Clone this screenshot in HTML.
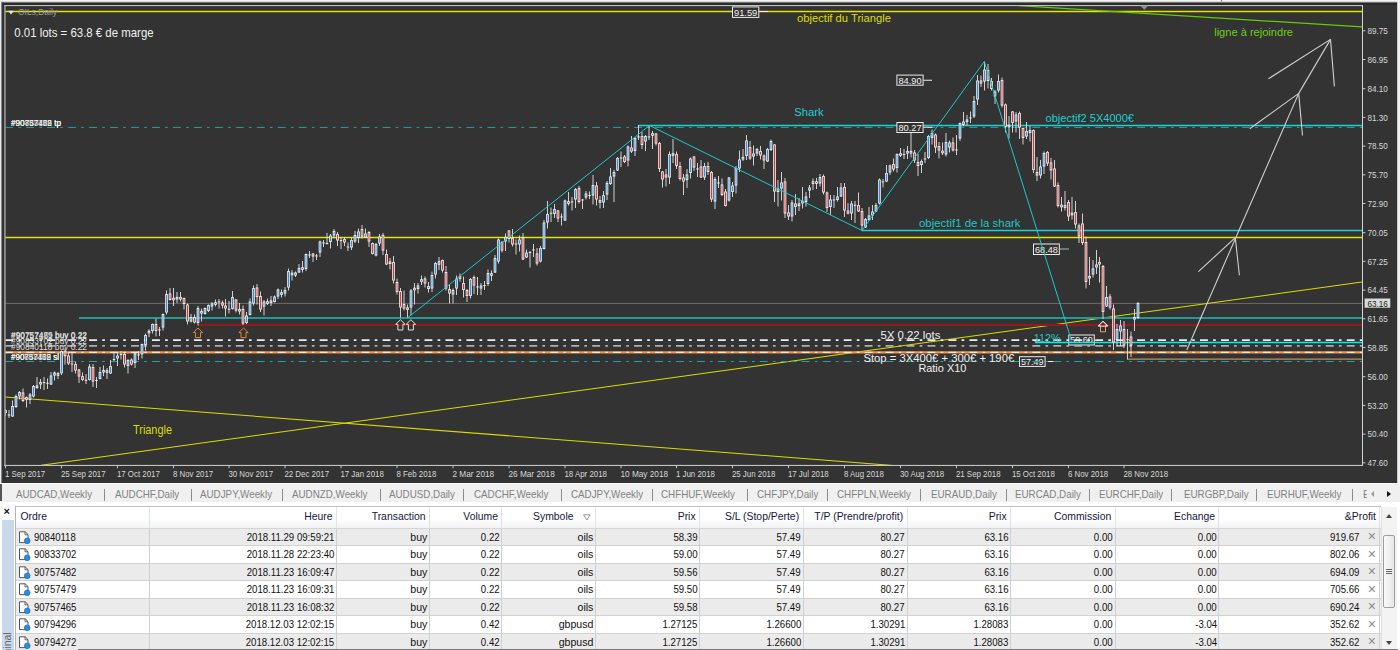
<!DOCTYPE html>
<html lang="fr"><head><meta charset="utf-8"><title>OILs,Daily</title>
<style>
html,body{margin:0;padding:0;}
body{width:1400px;height:650px;overflow:hidden;background:#fff;position:relative;font-family:"Liberation Sans", Arial, sans-serif;}
.chart{position:absolute;left:0;top:0;display:block;}
.tabs{position:absolute;left:0;top:483.4px;width:1400px;height:18.6px;background:#f0f0f0;border-top:1.3px solid #fbfbfb;box-sizing:border-box;overflow:hidden;}
.tabs:before{content:"";position:absolute;left:0;top:0;width:1.6px;height:17px;background:#555;}
.tab{position:absolute;top:3.9px;font-size:10.2px;line-height:13px;color:#828282;white-space:nowrap;transform:scaleX(0.962);transform-origin:left center;}
.sep{position:absolute;top:4.5px;width:1px;height:12px;background:#8c8c8c;}
.arl{position:absolute;left:1370.6px;top:6.5px;border:3px solid transparent;border-right:3.5px solid #9a9a9a;border-left:0;}
.arr{position:absolute;left:1386.5px;top:6.2px;border:3.4px solid transparent;border-left:4px solid #111;border-right:0;}
.term{position:absolute;left:0;top:502px;width:1400px;height:148px;background:#fff;overflow:hidden;}
.side{position:absolute;left:1.5px;top:18px;width:12px;height:130px;background:#c9d9ec;}
.sidetxt{position:absolute;left:-14px;top:143px;width:42px;height:12px;transform:rotate(-90deg);font-size:10.5px;color:#666;line-height:12px;white-space:nowrap;}
.xbtn{position:absolute;left:3.6px;top:3.0px;font-size:11px;font-weight:bold;color:#111;line-height:12px;}
.tbl{position:absolute;left:15px;top:4.2px;width:1366px;height:144px;border-top:1px solid #c2c2c2;border-left:1px solid #b4b4b4;box-sizing:border-box;background:#fff;overflow:hidden;}
.hdr{position:absolute;left:-1px;top:0;width:1366px;height:20.5px;background:linear-gradient(#ffffff,#ffffff 55%,#f1f2f4);border-bottom:1px solid #d5d5d5;}
.hc{position:absolute;top:0;height:20.5px;box-sizing:border-box;border-right:1px solid #e2e3e6;font-size:10.4px;color:#16163a;line-height:19.8px;white-space:nowrap;}
.hc.r{text-align:right;padding-right:3.4px;}
.hc.l{text-align:left;padding-left:5.5px;}
.srt{margin-left:9.5px;margin-right:0.6px;vertical-align:-0.5px;}
.row{position:absolute;left:-1px;width:1366px;height:17.5px;border-bottom:1px solid #d2d2d2;box-sizing:border-box;background:#fff;}
.row.g{background:#ebebeb;}
.c{position:absolute;top:0;height:16.5px;box-sizing:border-box;border-right:1px solid #d0d0d0;font-size:10.6px;color:#111;line-height:16.2px;white-space:nowrap;}
.c.r{text-align:right;padding-right:1.6px;}
.c.l{text-align:left;}
.v{display:inline-block;}
.n{transform:scaleX(0.91);transform-origin:right center;}
.ico{position:absolute;left:3px;top:2px;}
.ord{position:absolute;left:19px;top:0;display:inline-block;transform:scaleX(0.9);transform-origin:left center;}
.pv{position:absolute;right:19.5px;top:0;display:inline-block;transform:scaleX(0.91);transform-origin:right center;}
.cx{position:absolute;right:3.5px;top:-0.5px;font-size:14px;color:#8a8a8a;}
.sb{position:absolute;left:1381px;top:4.5px;width:16.2px;height:144px;background:#f3f3f3;border-left:1px solid #e0e0e0;box-sizing:border-box;}
.sb .up{position:absolute;left:4.4px;top:7px;border:3.3px solid transparent;border-bottom:4px solid #444;border-top:0;}
.sb .dn{position:absolute;left:4.4px;top:134px;border:3.3px solid transparent;border-top:4px solid #444;border-bottom:0;}
.thumb{position:absolute;left:1.2px;top:28.5px;width:11.6px;height:72.5px;background:linear-gradient(90deg,#fafafa,#e6e6e6);border:1px solid #9e9e9e;border-radius:2px;box-sizing:border-box;}
.thumb i{display:block;width:5.4px;height:1px;background:#666;margin:0 0 1.2px 2.2px;}
.thumb i:first-child{margin-top:32.5px;}
.botline{position:absolute;left:78px;top:146.6px;width:1320px;height:1.4px;background:#7a7a7a;}
</style></head>
<body>
<svg class="chart" width="1400" height="484" viewBox="0 0 1400 484" font-family='"Liberation Sans", Arial, sans-serif'>
<rect x="0" y="0" width="1400" height="484" fill="#333333"/>
<defs><clipPath id="plot"><rect x="5" y="6" width="1357" height="459.4"/></clipPath></defs>
<g clip-path="url(#plot)">
<rect x="1068.8" y="335.0" width="25.5" height="10.0" fill="#333333" stroke="#ececec" stroke-width="1"/>
<line x1="1094.8" y1="340" x2="1094.8" y2="340" stroke="#f0f0f0" stroke-width="1.1"/>
<text x="1081.55" y="343.3" font-size="9.8" fill="#f2f2f2" textLength="22.5" lengthAdjust="spacingAndGlyphs" text-anchor="middle">59.60</text>
<rect x="1019.5" y="356.7" width="25.6" height="9.7" fill="#333333" stroke="#ececec" stroke-width="1"/>
<line x1="1045.6" y1="361.5" x2="1055" y2="361.5" stroke="#f0f0f0" stroke-width="1.1"/>
<text x="1032.3" y="364.7" font-size="9.8" fill="#f2f2f2" textLength="22.6" lengthAdjust="spacingAndGlyphs" text-anchor="middle">57.49</text>
<line x1="5" y1="303.4" x2="1362.0" y2="303.4" stroke="#6c6c6c" stroke-width="1"/>
<line x1="5" y1="11.5" x2="1362.0" y2="11.5" stroke="#e4e400" stroke-width="1.4"/>
<line x1="5" y1="237.5" x2="1362.0" y2="237.5" stroke="#e4e400" stroke-width="1.4"/>
<line x1="1018.8" y1="5.7" x2="1362.0" y2="26.9" stroke="#66cc00" stroke-width="1.3"/>
<line x1="5.0" y1="397.0" x2="893.0" y2="465.4" stroke="#dcdc00" stroke-width="1.05"/>
<line x1="41.4" y1="465.2" x2="1362.0" y2="282.0" stroke="#dcdc00" stroke-width="1.05"/>
<line x1="79" y1="318" x2="1362.0" y2="318" stroke="#1e9c9c" stroke-width="2.2"/>
<line x1="198" y1="325" x2="1362.0" y2="325" stroke="#8e1c1c" stroke-width="2.2"/>
<line x1="5" y1="127.4" x2="1362.0" y2="127.4" stroke="#22a2a2" stroke-width="1.0" stroke-dasharray="7.9 5.2 2.66 5.2" stroke-dashoffset="-0.3"/>
<line x1="638.5" y1="125.5" x2="1362.0" y2="125.5" stroke="#16d4d4" stroke-width="1.3"/>
<line x1="862" y1="230.5" x2="1362.0" y2="230.5" stroke="#16d4d4" stroke-width="1.3"/>
<line x1="1035" y1="342.6" x2="1362.0" y2="342.6" stroke="#04f0f0" stroke-width="1.5"/>
<line x1="5" y1="340.2" x2="1362.0" y2="340.2" stroke="#ececec" stroke-width="1.75" stroke-dasharray="7.9 5.2 2.66 5.2" stroke-dashoffset="-0.3"/>
<line x1="5" y1="345.9" x2="1362.0" y2="345.9" stroke="#adadad" stroke-width="1.75" stroke-dasharray="7.9 5.2 2.66 5.2" stroke-dashoffset="-0.3"/>
<line x1="5" y1="352.3" x2="1362.0" y2="352.3" stroke="#f09650" stroke-width="2.2"/>
<line x1="5" y1="352.3" x2="1362.0" y2="352.3" stroke="#f4e6d8" stroke-width="1.2" stroke-dasharray="7.9 5.2 2.66 5.2" stroke-dashoffset="-0.3"/>
<line x1="1127.5" y1="359.2" x2="1362.0" y2="359.2" stroke="#c88c5a" stroke-width="1.3"/>
<line x1="5" y1="361.5" x2="1362.0" y2="361.5" stroke="#22a2a2" stroke-width="1.0" stroke-dasharray="7.9 5.2 2.66 5.2" stroke-dashoffset="-0.3"/>
<rect x="5.05" y="409.0" width="0.9" height="7.0" fill="#e2e2e2"/>
<rect x="4.19" y="410.0" width="2.62" height="3.0" fill="#f4f4f4"/>
<rect x="5.00" y="410.9" width="1.0" height="1.3" fill="#2f8fe6"/>
<rect x="8.55" y="410.0" width="0.9" height="8.0" fill="#e2e2e2"/>
<rect x="7.69" y="414.5" width="2.62" height="1.0" fill="#f4f4f4"/>
<rect x="12.05" y="400.5" width="0.9" height="16.5" fill="#e2e2e2"/>
<rect x="11.19" y="406.0" width="2.62" height="10.5" fill="#f4f4f4"/>
<rect x="12.00" y="406.9" width="1.0" height="8.8" fill="#2f8fe6"/>
<rect x="15.55" y="394.5" width="0.9" height="13.5" fill="#e2e2e2"/>
<rect x="14.69" y="396.0" width="2.62" height="11.0" fill="#f4f4f4"/>
<rect x="15.50" y="396.9" width="1.0" height="9.3" fill="#2f8fe6"/>
<rect x="19.05" y="391.0" width="0.9" height="8.5" fill="#e2e2e2"/>
<rect x="18.19" y="392.0" width="2.62" height="4.5" fill="#f4f4f4"/>
<rect x="19.00" y="392.9" width="1.0" height="2.8" fill="#2f8fe6"/>
<rect x="22.55" y="388.5" width="0.9" height="13.5" fill="#e2e2e2"/>
<rect x="21.69" y="392.5" width="2.62" height="8.5" fill="#f4f4f4"/>
<rect x="22.50" y="393.4" width="1.0" height="6.8" fill="#d63a3a"/>
<rect x="26.05" y="396.5" width="0.9" height="11.0" fill="#e2e2e2"/>
<rect x="25.19" y="397.2" width="2.62" height="2.6" fill="#f4f4f4"/>
<rect x="26.00" y="398.1" width="1.0" height="0.9" fill="#d63a3a"/>
<rect x="29.55" y="393.0" width="0.9" height="11.0" fill="#e2e2e2"/>
<rect x="28.69" y="394.5" width="2.62" height="5.5" fill="#f4f4f4"/>
<rect x="29.50" y="395.4" width="1.0" height="3.8" fill="#2f8fe6"/>
<rect x="33.05" y="385.0" width="0.9" height="12.5" fill="#e2e2e2"/>
<rect x="32.19" y="386.0" width="2.62" height="10.5" fill="#f4f4f4"/>
<rect x="33.00" y="386.9" width="1.0" height="8.8" fill="#2f8fe6"/>
<rect x="36.55" y="377.0" width="0.9" height="12.0" fill="#e2e2e2"/>
<rect x="35.69" y="385.4" width="2.62" height="2.6" fill="#f4f4f4"/>
<rect x="36.50" y="386.3" width="1.0" height="0.9" fill="#2f8fe6"/>
<rect x="40.05" y="379.0" width="0.9" height="10.0" fill="#e2e2e2"/>
<rect x="39.19" y="381.9" width="2.62" height="2.6" fill="#f4f4f4"/>
<rect x="40.00" y="382.8" width="1.0" height="0.9" fill="#2f8fe6"/>
<rect x="43.55" y="377.0" width="0.9" height="13.0" fill="#e2e2e2"/>
<rect x="42.69" y="382.2" width="2.62" height="0.9" fill="#f4f4f4"/>
<rect x="47.05" y="378.5" width="0.9" height="10.5" fill="#e2e2e2"/>
<rect x="46.19" y="382.8" width="2.62" height="0.9" fill="#f4f4f4"/>
<rect x="50.55" y="372.0" width="0.9" height="13.0" fill="#e2e2e2"/>
<rect x="49.69" y="375.5" width="2.62" height="9.0" fill="#f4f4f4"/>
<rect x="50.50" y="376.4" width="1.0" height="7.3" fill="#2f8fe6"/>
<rect x="54.05" y="371.5" width="0.9" height="9.0" fill="#e2e2e2"/>
<rect x="53.19" y="372.5" width="2.62" height="3.0" fill="#f4f4f4"/>
<rect x="54.00" y="373.4" width="1.0" height="1.3" fill="#2f8fe6"/>
<rect x="57.55" y="372.0" width="0.9" height="7.0" fill="#e2e2e2"/>
<rect x="56.69" y="373.2" width="2.62" height="2.6" fill="#f4f4f4"/>
<rect x="57.50" y="374.1" width="1.0" height="0.9" fill="#2f8fe6"/>
<rect x="61.05" y="350.5" width="0.9" height="24.5" fill="#e2e2e2"/>
<rect x="60.19" y="351.2" width="2.62" height="22.1" fill="#f4f4f4"/>
<rect x="61.00" y="352.1" width="1.0" height="20.4" fill="#2f8fe6"/>
<rect x="64.55" y="348.6" width="0.9" height="16.0" fill="#e2e2e2"/>
<rect x="63.69" y="351.4" width="2.62" height="4.8" fill="#f4f4f4"/>
<rect x="64.50" y="352.2" width="1.0" height="3.1" fill="#d63a3a"/>
<rect x="68.05" y="352.5" width="0.9" height="12.5" fill="#e2e2e2"/>
<rect x="67.19" y="355.5" width="2.62" height="8.0" fill="#f4f4f4"/>
<rect x="68.00" y="356.4" width="1.0" height="6.3" fill="#d63a3a"/>
<rect x="71.55" y="353.0" width="0.9" height="19.0" fill="#e2e2e2"/>
<rect x="70.69" y="363.5" width="2.62" height="0.9" fill="#f4f4f4"/>
<rect x="75.05" y="362.0" width="0.9" height="11.5" fill="#e2e2e2"/>
<rect x="74.19" y="364.0" width="2.62" height="6.5" fill="#f4f4f4"/>
<rect x="75.00" y="364.9" width="1.0" height="4.8" fill="#d63a3a"/>
<rect x="78.55" y="369.0" width="0.9" height="14.0" fill="#e2e2e2"/>
<rect x="77.69" y="369.5" width="2.62" height="7.0" fill="#f4f4f4"/>
<rect x="78.50" y="370.4" width="1.0" height="5.3" fill="#d63a3a"/>
<rect x="82.05" y="372.5" width="0.9" height="8.5" fill="#e2e2e2"/>
<rect x="81.19" y="376.2" width="2.62" height="3.8" fill="#f4f4f4"/>
<rect x="82.00" y="377.1" width="1.0" height="2.1" fill="#d63a3a"/>
<rect x="85.55" y="374.0" width="0.9" height="10.0" fill="#e2e2e2"/>
<rect x="84.69" y="379.8" width="2.62" height="0.9" fill="#f4f4f4"/>
<rect x="89.05" y="364.0" width="0.9" height="16.5" fill="#e2e2e2"/>
<rect x="88.19" y="366.5" width="2.62" height="13.5" fill="#f4f4f4"/>
<rect x="89.00" y="367.4" width="1.0" height="11.8" fill="#2f8fe6"/>
<rect x="92.55" y="364.0" width="0.9" height="23.0" fill="#e2e2e2"/>
<rect x="91.69" y="367.0" width="2.62" height="14.5" fill="#f4f4f4"/>
<rect x="92.50" y="367.9" width="1.0" height="12.8" fill="#d63a3a"/>
<rect x="96.05" y="377.0" width="0.9" height="11.0" fill="#e2e2e2"/>
<rect x="95.19" y="380.0" width="2.62" height="0.9" fill="#f4f4f4"/>
<rect x="99.55" y="367.0" width="0.9" height="12.5" fill="#e2e2e2"/>
<rect x="98.69" y="372.0" width="2.62" height="7.0" fill="#f4f4f4"/>
<rect x="99.50" y="372.9" width="1.0" height="5.3" fill="#2f8fe6"/>
<rect x="103.05" y="365.5" width="0.9" height="10.5" fill="#e2e2e2"/>
<rect x="102.19" y="369.9" width="2.62" height="2.6" fill="#f4f4f4"/>
<rect x="103.00" y="370.8" width="1.0" height="0.9" fill="#2f8fe6"/>
<rect x="106.55" y="368.0" width="0.9" height="11.0" fill="#e2e2e2"/>
<rect x="105.69" y="370.2" width="2.62" height="2.6" fill="#f4f4f4"/>
<rect x="106.50" y="371.1" width="1.0" height="0.9" fill="#d63a3a"/>
<rect x="110.05" y="360.0" width="0.9" height="14.0" fill="#e2e2e2"/>
<rect x="109.19" y="366.0" width="2.62" height="7.5" fill="#f4f4f4"/>
<rect x="110.00" y="366.9" width="1.0" height="5.8" fill="#2f8fe6"/>
<rect x="113.55" y="353.0" width="0.9" height="8.0" fill="#e2e2e2"/>
<rect x="112.69" y="359.0" width="2.62" height="0.9" fill="#f4f4f4"/>
<rect x="117.05" y="352.5" width="0.9" height="13.5" fill="#e2e2e2"/>
<rect x="116.19" y="355.5" width="2.62" height="3.0" fill="#f4f4f4"/>
<rect x="117.00" y="356.4" width="1.0" height="1.3" fill="#2f8fe6"/>
<rect x="120.55" y="351.0" width="0.9" height="8.5" fill="#e2e2e2"/>
<rect x="119.69" y="354.0" width="2.62" height="0.9" fill="#f4f4f4"/>
<rect x="124.05" y="352.5" width="0.9" height="15.0" fill="#e2e2e2"/>
<rect x="123.19" y="354.0" width="2.62" height="10.5" fill="#f4f4f4"/>
<rect x="124.00" y="354.9" width="1.0" height="8.8" fill="#d63a3a"/>
<rect x="127.55" y="359.0" width="0.9" height="14.5" fill="#e2e2e2"/>
<rect x="126.69" y="360.0" width="2.62" height="6.0" fill="#f4f4f4"/>
<rect x="127.50" y="360.9" width="1.0" height="4.3" fill="#2f8fe6"/>
<rect x="131.05" y="358.5" width="0.9" height="7.0" fill="#e2e2e2"/>
<rect x="130.19" y="359.5" width="2.62" height="5.0" fill="#f4f4f4"/>
<rect x="131.00" y="360.4" width="1.0" height="3.3" fill="#d63a3a"/>
<rect x="134.55" y="353.0" width="0.9" height="15.0" fill="#e2e2e2"/>
<rect x="133.69" y="353.5" width="2.62" height="9.5" fill="#f4f4f4"/>
<rect x="134.50" y="354.4" width="1.0" height="7.8" fill="#2f8fe6"/>
<rect x="138.05" y="351.0" width="0.9" height="9.0" fill="#e2e2e2"/>
<rect x="137.19" y="354.5" width="2.62" height="0.9" fill="#f4f4f4"/>
<rect x="141.55" y="343.6" width="0.9" height="15.0" fill="#e2e2e2"/>
<rect x="140.69" y="344.0" width="2.62" height="10.3" fill="#f4f4f4"/>
<rect x="141.50" y="344.9" width="1.0" height="8.6" fill="#2f8fe6"/>
<rect x="145.05" y="333.6" width="0.9" height="17.1" fill="#e2e2e2"/>
<rect x="144.19" y="335.0" width="2.62" height="10.0" fill="#f4f4f4"/>
<rect x="145.00" y="335.9" width="1.0" height="8.3" fill="#2f8fe6"/>
<rect x="148.55" y="329.3" width="0.9" height="7.8" fill="#e2e2e2"/>
<rect x="147.69" y="330.7" width="2.62" height="2.6" fill="#f4f4f4"/>
<rect x="148.50" y="331.6" width="1.0" height="0.9" fill="#2f8fe6"/>
<rect x="152.05" y="323.5" width="0.9" height="10.0" fill="#e2e2e2"/>
<rect x="151.19" y="324.0" width="2.62" height="7.0" fill="#f4f4f4"/>
<rect x="152.00" y="324.9" width="1.0" height="5.3" fill="#2f8fe6"/>
<rect x="155.55" y="318.5" width="0.9" height="18.0" fill="#e2e2e2"/>
<rect x="154.69" y="324.0" width="2.62" height="7.0" fill="#f4f4f4"/>
<rect x="155.50" y="324.9" width="1.0" height="5.3" fill="#d63a3a"/>
<rect x="159.05" y="327.0" width="0.9" height="9.0" fill="#e2e2e2"/>
<rect x="158.19" y="329.5" width="2.62" height="0.9" fill="#f4f4f4"/>
<rect x="162.55" y="313.5" width="0.9" height="17.0" fill="#e2e2e2"/>
<rect x="161.69" y="314.0" width="2.62" height="13.5" fill="#f4f4f4"/>
<rect x="162.50" y="314.9" width="1.0" height="11.8" fill="#2f8fe6"/>
<rect x="166.05" y="290.5" width="0.9" height="24.0" fill="#e2e2e2"/>
<rect x="165.19" y="294.0" width="2.62" height="18.5" fill="#f4f4f4"/>
<rect x="166.00" y="294.9" width="1.0" height="16.8" fill="#2f8fe6"/>
<rect x="169.55" y="288.0" width="0.9" height="12.5" fill="#e2e2e2"/>
<rect x="168.69" y="293.5" width="2.62" height="6.5" fill="#f4f4f4"/>
<rect x="169.50" y="294.4" width="1.0" height="4.8" fill="#d63a3a"/>
<rect x="173.05" y="288.0" width="0.9" height="18.0" fill="#e2e2e2"/>
<rect x="172.19" y="297.7" width="2.62" height="2.6" fill="#f4f4f4"/>
<rect x="173.00" y="298.6" width="1.0" height="0.9" fill="#d63a3a"/>
<rect x="176.55" y="292.0" width="0.9" height="11.0" fill="#e2e2e2"/>
<rect x="175.69" y="296.9" width="2.62" height="2.6" fill="#f4f4f4"/>
<rect x="176.50" y="297.8" width="1.0" height="0.9" fill="#2f8fe6"/>
<rect x="180.05" y="292.0" width="0.9" height="9.5" fill="#e2e2e2"/>
<rect x="179.19" y="296.9" width="2.62" height="2.6" fill="#f4f4f4"/>
<rect x="180.00" y="297.8" width="1.0" height="0.9" fill="#d63a3a"/>
<rect x="183.55" y="297.5" width="0.9" height="12.0" fill="#e2e2e2"/>
<rect x="182.69" y="298.0" width="2.62" height="6.0" fill="#f4f4f4"/>
<rect x="183.50" y="298.9" width="1.0" height="4.3" fill="#d63a3a"/>
<rect x="187.05" y="303.5" width="0.9" height="21.0" fill="#e2e2e2"/>
<rect x="186.19" y="304.5" width="2.62" height="17.0" fill="#f4f4f4"/>
<rect x="187.00" y="305.4" width="1.0" height="15.3" fill="#d63a3a"/>
<rect x="190.55" y="314.0" width="0.9" height="8.5" fill="#e2e2e2"/>
<rect x="189.69" y="317.0" width="2.62" height="4.5" fill="#f4f4f4"/>
<rect x="190.50" y="317.9" width="1.0" height="2.8" fill="#2f8fe6"/>
<rect x="194.05" y="314.5" width="0.9" height="9.0" fill="#e2e2e2"/>
<rect x="193.19" y="317.0" width="2.62" height="5.5" fill="#f4f4f4"/>
<rect x="194.00" y="317.9" width="1.0" height="3.8" fill="#d63a3a"/>
<rect x="197.55" y="306.0" width="0.9" height="19.5" fill="#e2e2e2"/>
<rect x="196.69" y="308.0" width="2.62" height="15.0" fill="#f4f4f4"/>
<rect x="197.50" y="308.9" width="1.0" height="13.3" fill="#2f8fe6"/>
<rect x="201.05" y="308.5" width="0.9" height="13.0" fill="#e2e2e2"/>
<rect x="200.19" y="310.9" width="2.62" height="2.6" fill="#f4f4f4"/>
<rect x="201.00" y="311.8" width="1.0" height="0.9" fill="#d63a3a"/>
<rect x="204.55" y="307.5" width="0.9" height="7.0" fill="#e2e2e2"/>
<rect x="203.69" y="308.0" width="2.62" height="6.0" fill="#f4f4f4"/>
<rect x="204.50" y="308.9" width="1.0" height="4.3" fill="#2f8fe6"/>
<rect x="208.05" y="304.5" width="0.9" height="7.5" fill="#e2e2e2"/>
<rect x="207.19" y="305.0" width="2.62" height="6.0" fill="#f4f4f4"/>
<rect x="208.00" y="305.9" width="1.0" height="4.3" fill="#2f8fe6"/>
<rect x="211.55" y="302.0" width="0.9" height="8.5" fill="#e2e2e2"/>
<rect x="210.69" y="303.5" width="2.62" height="3.0" fill="#f4f4f4"/>
<rect x="211.50" y="304.4" width="1.0" height="1.3" fill="#2f8fe6"/>
<rect x="215.05" y="299.5" width="0.9" height="7.0" fill="#e2e2e2"/>
<rect x="214.19" y="302.2" width="2.62" height="2.6" fill="#f4f4f4"/>
<rect x="215.00" y="303.1" width="1.0" height="0.9" fill="#2f8fe6"/>
<rect x="218.55" y="299.0" width="0.9" height="9.5" fill="#e2e2e2"/>
<rect x="217.69" y="301.5" width="2.62" height="0.9" fill="#f4f4f4"/>
<rect x="222.05" y="300.5" width="0.9" height="8.0" fill="#e2e2e2"/>
<rect x="221.19" y="302.5" width="2.62" height="3.0" fill="#f4f4f4"/>
<rect x="222.00" y="303.4" width="1.0" height="1.3" fill="#d63a3a"/>
<rect x="225.05" y="299.0" width="0.9" height="17.5" fill="#e2e2e2"/>
<rect x="224.19" y="305.5" width="2.62" height="3.0" fill="#f4f4f4"/>
<rect x="225.00" y="306.4" width="1.0" height="1.3" fill="#d63a3a"/>
<rect x="228.55" y="301.0" width="0.9" height="12.5" fill="#e2e2e2"/>
<rect x="227.69" y="308.8" width="2.62" height="0.9" fill="#f4f4f4"/>
<rect x="232.05" y="291.0" width="0.9" height="18.5" fill="#e2e2e2"/>
<rect x="231.19" y="297.0" width="2.62" height="12.0" fill="#f4f4f4"/>
<rect x="232.00" y="297.9" width="1.0" height="10.3" fill="#2f8fe6"/>
<rect x="235.55" y="299.0" width="0.9" height="13.5" fill="#e2e2e2"/>
<rect x="234.69" y="299.5" width="2.62" height="11.0" fill="#f4f4f4"/>
<rect x="235.50" y="300.4" width="1.0" height="9.3" fill="#d63a3a"/>
<rect x="239.05" y="303.0" width="0.9" height="11.5" fill="#e2e2e2"/>
<rect x="238.19" y="308.9" width="2.62" height="2.6" fill="#f4f4f4"/>
<rect x="239.00" y="309.8" width="1.0" height="0.9" fill="#2f8fe6"/>
<rect x="242.55" y="305.5" width="0.9" height="19.5" fill="#e2e2e2"/>
<rect x="241.69" y="309.0" width="2.62" height="14.5" fill="#f4f4f4"/>
<rect x="242.50" y="309.9" width="1.0" height="12.8" fill="#d63a3a"/>
<rect x="246.05" y="312.0" width="0.9" height="12.0" fill="#e2e2e2"/>
<rect x="245.19" y="315.5" width="2.62" height="7.5" fill="#f4f4f4"/>
<rect x="246.00" y="316.4" width="1.0" height="5.8" fill="#2f8fe6"/>
<rect x="249.55" y="298.5" width="0.9" height="17.0" fill="#e2e2e2"/>
<rect x="248.69" y="301.5" width="2.62" height="13.5" fill="#f4f4f4"/>
<rect x="249.50" y="302.4" width="1.0" height="11.8" fill="#2f8fe6"/>
<rect x="253.05" y="285.5" width="0.9" height="20.0" fill="#e2e2e2"/>
<rect x="252.19" y="288.0" width="2.62" height="15.5" fill="#f4f4f4"/>
<rect x="253.00" y="288.9" width="1.0" height="13.8" fill="#2f8fe6"/>
<rect x="256.55" y="284.0" width="0.9" height="20.5" fill="#e2e2e2"/>
<rect x="255.69" y="287.5" width="2.62" height="9.5" fill="#f4f4f4"/>
<rect x="256.50" y="288.4" width="1.0" height="7.8" fill="#d63a3a"/>
<rect x="260.05" y="291.5" width="0.9" height="20.5" fill="#e2e2e2"/>
<rect x="259.19" y="296.0" width="2.62" height="13.5" fill="#f4f4f4"/>
<rect x="260.00" y="296.9" width="1.0" height="11.8" fill="#d63a3a"/>
<rect x="263.55" y="300.0" width="0.9" height="15.5" fill="#e2e2e2"/>
<rect x="262.69" y="301.5" width="2.62" height="5.0" fill="#f4f4f4"/>
<rect x="263.50" y="302.4" width="1.0" height="3.3" fill="#2f8fe6"/>
<rect x="267.05" y="298.5" width="0.9" height="6.5" fill="#e2e2e2"/>
<rect x="266.19" y="301.2" width="2.62" height="2.6" fill="#f4f4f4"/>
<rect x="267.00" y="302.1" width="1.0" height="0.9" fill="#d63a3a"/>
<rect x="270.55" y="296.0" width="0.9" height="10.0" fill="#e2e2e2"/>
<rect x="269.69" y="300.4" width="2.62" height="2.6" fill="#f4f4f4"/>
<rect x="270.50" y="301.3" width="1.0" height="0.9" fill="#2f8fe6"/>
<rect x="274.05" y="295.5" width="0.9" height="7.0" fill="#e2e2e2"/>
<rect x="273.19" y="296.5" width="2.62" height="5.5" fill="#f4f4f4"/>
<rect x="274.00" y="297.4" width="1.0" height="3.8" fill="#2f8fe6"/>
<rect x="277.55" y="288.5" width="0.9" height="10.5" fill="#e2e2e2"/>
<rect x="276.69" y="289.5" width="2.62" height="7.0" fill="#f4f4f4"/>
<rect x="277.50" y="290.4" width="1.0" height="5.3" fill="#2f8fe6"/>
<rect x="281.05" y="289.5" width="0.9" height="8.0" fill="#e2e2e2"/>
<rect x="280.19" y="292.2" width="2.62" height="2.6" fill="#f4f4f4"/>
<rect x="281.00" y="293.1" width="1.0" height="0.9" fill="#2f8fe6"/>
<rect x="284.55" y="287.0" width="0.9" height="9.5" fill="#e2e2e2"/>
<rect x="283.69" y="290.0" width="2.62" height="3.5" fill="#f4f4f4"/>
<rect x="284.50" y="290.9" width="1.0" height="1.8" fill="#2f8fe6"/>
<rect x="288.05" y="268.5" width="0.9" height="22.0" fill="#e2e2e2"/>
<rect x="287.19" y="271.0" width="2.62" height="16.5" fill="#f4f4f4"/>
<rect x="288.00" y="271.9" width="1.0" height="14.8" fill="#2f8fe6"/>
<rect x="291.55" y="270.0" width="0.9" height="10.5" fill="#e2e2e2"/>
<rect x="290.69" y="272.7" width="2.62" height="2.6" fill="#f4f4f4"/>
<rect x="291.50" y="273.6" width="1.0" height="0.9" fill="#d63a3a"/>
<rect x="295.05" y="271.5" width="0.9" height="5.5" fill="#e2e2e2"/>
<rect x="294.19" y="272.5" width="2.62" height="3.0" fill="#f4f4f4"/>
<rect x="295.00" y="273.4" width="1.0" height="1.3" fill="#2f8fe6"/>
<rect x="298.55" y="264.0" width="0.9" height="9.0" fill="#e2e2e2"/>
<rect x="297.69" y="268.0" width="2.62" height="4.5" fill="#f4f4f4"/>
<rect x="298.50" y="268.9" width="1.0" height="2.8" fill="#2f8fe6"/>
<rect x="302.05" y="261.0" width="0.9" height="11.5" fill="#e2e2e2"/>
<rect x="301.19" y="267.2" width="2.62" height="2.6" fill="#f4f4f4"/>
<rect x="302.00" y="268.1" width="1.0" height="0.9" fill="#d63a3a"/>
<rect x="305.55" y="253.5" width="0.9" height="17.5" fill="#e2e2e2"/>
<rect x="304.69" y="254.0" width="2.62" height="15.0" fill="#f4f4f4"/>
<rect x="305.50" y="254.8" width="1.0" height="13.3" fill="#2f8fe6"/>
<rect x="309.05" y="251.0" width="0.9" height="7.0" fill="#e2e2e2"/>
<rect x="308.19" y="254.5" width="2.62" height="0.9" fill="#f4f4f4"/>
<rect x="312.55" y="253.0" width="0.9" height="9.0" fill="#e2e2e2"/>
<rect x="311.69" y="253.5" width="2.62" height="3.0" fill="#f4f4f4"/>
<rect x="312.50" y="254.3" width="1.0" height="1.3" fill="#d63a3a"/>
<rect x="316.05" y="254.0" width="0.9" height="6.0" fill="#e2e2e2"/>
<rect x="315.19" y="255.5" width="2.62" height="0.9" fill="#f4f4f4"/>
<rect x="319.55" y="240.5" width="0.9" height="16.5" fill="#e2e2e2"/>
<rect x="318.69" y="241.5" width="2.62" height="11.0" fill="#f4f4f4"/>
<rect x="319.50" y="242.3" width="1.0" height="9.3" fill="#2f8fe6"/>
<rect x="323.05" y="240.0" width="0.9" height="7.0" fill="#e2e2e2"/>
<rect x="322.19" y="242.5" width="2.62" height="0.9" fill="#f4f4f4"/>
<rect x="326.55" y="233.0" width="0.9" height="11.5" fill="#e2e2e2"/>
<rect x="325.69" y="243.0" width="2.62" height="0.9" fill="#f4f4f4"/>
<rect x="330.05" y="234.0" width="0.9" height="14.5" fill="#e2e2e2"/>
<rect x="329.19" y="235.5" width="2.62" height="6.5" fill="#f4f4f4"/>
<rect x="330.00" y="236.3" width="1.0" height="4.8" fill="#2f8fe6"/>
<rect x="333.55" y="229.0" width="0.9" height="9.5" fill="#e2e2e2"/>
<rect x="332.69" y="231.0" width="2.62" height="4.5" fill="#f4f4f4"/>
<rect x="333.50" y="231.8" width="1.0" height="2.8" fill="#2f8fe6"/>
<rect x="337.05" y="232.0" width="0.9" height="14.0" fill="#e2e2e2"/>
<rect x="336.19" y="234.0" width="2.62" height="6.5" fill="#f4f4f4"/>
<rect x="337.00" y="234.8" width="1.0" height="4.8" fill="#d63a3a"/>
<rect x="340.55" y="237.0" width="0.9" height="12.0" fill="#e2e2e2"/>
<rect x="339.69" y="240.0" width="2.62" height="0.9" fill="#f4f4f4"/>
<rect x="344.05" y="237.0" width="0.9" height="9.0" fill="#e2e2e2"/>
<rect x="343.19" y="239.0" width="2.62" height="3.5" fill="#f4f4f4"/>
<rect x="344.00" y="239.8" width="1.0" height="1.8" fill="#d63a3a"/>
<rect x="347.55" y="242.5" width="0.9" height="8.5" fill="#e2e2e2"/>
<rect x="346.69" y="246.5" width="2.62" height="0.9" fill="#f4f4f4"/>
<rect x="351.05" y="238.0" width="0.9" height="12.0" fill="#e2e2e2"/>
<rect x="350.19" y="240.0" width="2.62" height="7.5" fill="#f4f4f4"/>
<rect x="351.00" y="240.8" width="1.0" height="5.8" fill="#2f8fe6"/>
<rect x="354.55" y="231.0" width="0.9" height="12.0" fill="#e2e2e2"/>
<rect x="353.69" y="235.0" width="2.62" height="6.5" fill="#f4f4f4"/>
<rect x="354.50" y="235.8" width="1.0" height="4.8" fill="#2f8fe6"/>
<rect x="358.05" y="228.5" width="0.9" height="14.5" fill="#e2e2e2"/>
<rect x="357.19" y="231.5" width="2.62" height="6.5" fill="#f4f4f4"/>
<rect x="358.00" y="232.3" width="1.0" height="4.8" fill="#2f8fe6"/>
<rect x="361.55" y="225.0" width="0.9" height="13.5" fill="#e2e2e2"/>
<rect x="360.69" y="229.0" width="2.62" height="7.5" fill="#f4f4f4"/>
<rect x="361.50" y="229.8" width="1.0" height="5.8" fill="#d63a3a"/>
<rect x="365.05" y="228.5" width="0.9" height="9.5" fill="#e2e2e2"/>
<rect x="364.19" y="233.5" width="2.62" height="4.0" fill="#f4f4f4"/>
<rect x="365.00" y="234.3" width="1.0" height="2.3" fill="#2f8fe6"/>
<rect x="368.55" y="231.0" width="0.9" height="16.0" fill="#e2e2e2"/>
<rect x="367.69" y="232.0" width="2.62" height="9.5" fill="#f4f4f4"/>
<rect x="368.50" y="232.8" width="1.0" height="7.8" fill="#d63a3a"/>
<rect x="372.05" y="242.5" width="0.9" height="12.0" fill="#e2e2e2"/>
<rect x="371.19" y="243.0" width="2.62" height="11.0" fill="#f4f4f4"/>
<rect x="372.00" y="243.8" width="1.0" height="9.3" fill="#d63a3a"/>
<rect x="375.55" y="243.0" width="0.9" height="13.5" fill="#e2e2e2"/>
<rect x="374.69" y="244.0" width="2.62" height="11.5" fill="#f4f4f4"/>
<rect x="375.50" y="244.8" width="1.0" height="9.8" fill="#2f8fe6"/>
<rect x="379.05" y="234.0" width="0.9" height="12.0" fill="#e2e2e2"/>
<rect x="378.19" y="236.5" width="2.62" height="7.0" fill="#f4f4f4"/>
<rect x="379.00" y="237.3" width="1.0" height="5.3" fill="#2f8fe6"/>
<rect x="382.55" y="233.0" width="0.9" height="22.0" fill="#e2e2e2"/>
<rect x="381.69" y="235.0" width="2.62" height="15.5" fill="#f4f4f4"/>
<rect x="382.50" y="235.8" width="1.0" height="13.8" fill="#d63a3a"/>
<rect x="386.05" y="249.5" width="0.9" height="15.5" fill="#e2e2e2"/>
<rect x="385.19" y="254.0" width="2.62" height="10.5" fill="#f4f4f4"/>
<rect x="386.00" y="254.8" width="1.0" height="8.8" fill="#d63a3a"/>
<rect x="389.55" y="258.0" width="0.9" height="11.5" fill="#e2e2e2"/>
<rect x="388.69" y="261.4" width="2.62" height="2.6" fill="#f4f4f4"/>
<rect x="389.50" y="262.3" width="1.0" height="0.9" fill="#2f8fe6"/>
<rect x="393.05" y="256.0" width="0.9" height="27.5" fill="#e2e2e2"/>
<rect x="392.19" y="262.0" width="2.62" height="18.5" fill="#f4f4f4"/>
<rect x="393.00" y="262.9" width="1.0" height="16.8" fill="#d63a3a"/>
<rect x="396.55" y="278.5" width="0.9" height="16.0" fill="#e2e2e2"/>
<rect x="395.69" y="282.0" width="2.62" height="10.0" fill="#f4f4f4"/>
<rect x="396.50" y="282.9" width="1.0" height="8.3" fill="#d63a3a"/>
<rect x="400.05" y="288.0" width="0.9" height="29.5" fill="#e2e2e2"/>
<rect x="399.19" y="291.0" width="2.62" height="16.5" fill="#f4f4f4"/>
<rect x="400.00" y="291.9" width="1.0" height="14.8" fill="#d63a3a"/>
<rect x="403.55" y="290.5" width="0.9" height="20.0" fill="#e2e2e2"/>
<rect x="402.69" y="304.0" width="2.62" height="4.5" fill="#f4f4f4"/>
<rect x="403.50" y="304.9" width="1.0" height="2.8" fill="#d63a3a"/>
<rect x="407.05" y="304.5" width="0.9" height="13.0" fill="#e2e2e2"/>
<rect x="406.19" y="307.4" width="2.62" height="2.6" fill="#f4f4f4"/>
<rect x="407.00" y="308.3" width="1.0" height="0.9" fill="#d63a3a"/>
<rect x="410.55" y="289.0" width="0.9" height="26.0" fill="#e2e2e2"/>
<rect x="409.69" y="290.5" width="2.62" height="17.0" fill="#f4f4f4"/>
<rect x="410.50" y="291.4" width="1.0" height="15.3" fill="#2f8fe6"/>
<rect x="414.05" y="283.0" width="0.9" height="21.5" fill="#e2e2e2"/>
<rect x="413.19" y="287.7" width="2.62" height="2.6" fill="#f4f4f4"/>
<rect x="414.00" y="288.6" width="1.0" height="0.9" fill="#d63a3a"/>
<rect x="417.55" y="283.0" width="0.9" height="10.5" fill="#e2e2e2"/>
<rect x="416.69" y="285.5" width="2.62" height="3.5" fill="#f4f4f4"/>
<rect x="417.50" y="286.4" width="1.0" height="1.8" fill="#2f8fe6"/>
<rect x="421.05" y="275.5" width="0.9" height="9.5" fill="#e2e2e2"/>
<rect x="420.19" y="279.2" width="2.62" height="2.6" fill="#f4f4f4"/>
<rect x="421.00" y="280.1" width="1.0" height="0.9" fill="#2f8fe6"/>
<rect x="424.55" y="276.5" width="0.9" height="11.0" fill="#e2e2e2"/>
<rect x="423.69" y="278.5" width="2.62" height="5.0" fill="#f4f4f4"/>
<rect x="424.50" y="279.4" width="1.0" height="3.3" fill="#d63a3a"/>
<rect x="428.05" y="282.0" width="0.9" height="10.5" fill="#e2e2e2"/>
<rect x="427.19" y="286.0" width="2.62" height="3.0" fill="#f4f4f4"/>
<rect x="428.00" y="286.9" width="1.0" height="1.3" fill="#2f8fe6"/>
<rect x="431.55" y="271.5" width="0.9" height="20.5" fill="#e2e2e2"/>
<rect x="430.69" y="275.0" width="2.62" height="13.5" fill="#f4f4f4"/>
<rect x="431.50" y="275.9" width="1.0" height="11.8" fill="#2f8fe6"/>
<rect x="435.05" y="262.0" width="0.9" height="16.5" fill="#e2e2e2"/>
<rect x="434.19" y="263.0" width="2.62" height="11.5" fill="#f4f4f4"/>
<rect x="435.00" y="263.9" width="1.0" height="9.8" fill="#2f8fe6"/>
<rect x="438.55" y="257.0" width="0.9" height="13.0" fill="#e2e2e2"/>
<rect x="437.69" y="261.2" width="2.62" height="3.5" fill="#f4f4f4"/>
<rect x="438.50" y="262.1" width="1.0" height="1.8" fill="#2f8fe6"/>
<rect x="442.05" y="259.5" width="0.9" height="13.0" fill="#e2e2e2"/>
<rect x="441.19" y="260.0" width="2.62" height="10.5" fill="#f4f4f4"/>
<rect x="442.00" y="260.9" width="1.0" height="8.8" fill="#d63a3a"/>
<rect x="445.55" y="266.0" width="0.9" height="24.5" fill="#e2e2e2"/>
<rect x="444.69" y="272.0" width="2.62" height="16.5" fill="#f4f4f4"/>
<rect x="445.50" y="272.9" width="1.0" height="14.8" fill="#d63a3a"/>
<rect x="449.05" y="285.0" width="0.9" height="18.5" fill="#e2e2e2"/>
<rect x="448.19" y="289.0" width="2.62" height="4.5" fill="#f4f4f4"/>
<rect x="449.00" y="289.9" width="1.0" height="2.8" fill="#d63a3a"/>
<rect x="452.55" y="288.5" width="0.9" height="15.0" fill="#e2e2e2"/>
<rect x="451.69" y="290.0" width="2.62" height="4.5" fill="#f4f4f4"/>
<rect x="452.50" y="290.9" width="1.0" height="2.8" fill="#2f8fe6"/>
<rect x="456.05" y="275.5" width="0.9" height="19.5" fill="#e2e2e2"/>
<rect x="455.19" y="278.5" width="2.62" height="10.0" fill="#f4f4f4"/>
<rect x="456.00" y="279.4" width="1.0" height="8.3" fill="#2f8fe6"/>
<rect x="459.55" y="273.5" width="0.9" height="8.0" fill="#e2e2e2"/>
<rect x="458.69" y="276.2" width="2.62" height="2.6" fill="#f4f4f4"/>
<rect x="459.50" y="277.1" width="1.0" height="0.9" fill="#d63a3a"/>
<rect x="463.05" y="276.5" width="0.9" height="21.0" fill="#e2e2e2"/>
<rect x="462.19" y="283.0" width="2.62" height="7.0" fill="#f4f4f4"/>
<rect x="463.00" y="283.9" width="1.0" height="5.3" fill="#d63a3a"/>
<rect x="466.55" y="289.0" width="0.9" height="13.0" fill="#e2e2e2"/>
<rect x="465.69" y="290.0" width="2.62" height="6.0" fill="#f4f4f4"/>
<rect x="466.50" y="290.9" width="1.0" height="4.3" fill="#d63a3a"/>
<rect x="470.05" y="278.0" width="0.9" height="20.5" fill="#e2e2e2"/>
<rect x="469.19" y="279.0" width="2.62" height="17.0" fill="#f4f4f4"/>
<rect x="470.00" y="279.9" width="1.0" height="15.3" fill="#2f8fe6"/>
<rect x="473.55" y="275.5" width="0.9" height="18.5" fill="#e2e2e2"/>
<rect x="472.69" y="277.0" width="2.62" height="8.5" fill="#f4f4f4"/>
<rect x="473.50" y="277.9" width="1.0" height="6.8" fill="#d63a3a"/>
<rect x="477.05" y="277.0" width="0.9" height="18.0" fill="#e2e2e2"/>
<rect x="476.19" y="286.5" width="2.62" height="0.9" fill="#f4f4f4"/>
<rect x="480.55" y="283.0" width="0.9" height="12.0" fill="#e2e2e2"/>
<rect x="479.69" y="285.5" width="2.62" height="3.0" fill="#f4f4f4"/>
<rect x="480.50" y="286.4" width="1.0" height="1.3" fill="#2f8fe6"/>
<rect x="484.05" y="281.0" width="0.9" height="9.0" fill="#e2e2e2"/>
<rect x="483.19" y="285.2" width="2.62" height="0.9" fill="#f4f4f4"/>
<rect x="487.55" y="269.5" width="0.9" height="16.5" fill="#e2e2e2"/>
<rect x="486.69" y="273.0" width="2.62" height="11.0" fill="#f4f4f4"/>
<rect x="487.50" y="273.9" width="1.0" height="9.3" fill="#2f8fe6"/>
<rect x="491.05" y="270.5" width="0.9" height="10.5" fill="#e2e2e2"/>
<rect x="490.19" y="273.2" width="2.62" height="2.6" fill="#f4f4f4"/>
<rect x="491.00" y="274.1" width="1.0" height="0.9" fill="#2f8fe6"/>
<rect x="494.55" y="255.0" width="0.9" height="18.0" fill="#e2e2e2"/>
<rect x="493.69" y="258.0" width="2.62" height="14.5" fill="#f4f4f4"/>
<rect x="494.50" y="258.9" width="1.0" height="12.8" fill="#2f8fe6"/>
<rect x="498.05" y="238.5" width="0.9" height="25.0" fill="#e2e2e2"/>
<rect x="497.19" y="239.5" width="2.62" height="22.0" fill="#f4f4f4"/>
<rect x="498.00" y="240.3" width="1.0" height="20.3" fill="#2f8fe6"/>
<rect x="501.55" y="241.0" width="0.9" height="11.5" fill="#e2e2e2"/>
<rect x="500.69" y="242.0" width="2.62" height="8.5" fill="#f4f4f4"/>
<rect x="501.50" y="242.8" width="1.0" height="6.8" fill="#d63a3a"/>
<rect x="505.05" y="233.5" width="0.9" height="17.5" fill="#e2e2e2"/>
<rect x="504.19" y="237.0" width="2.62" height="4.5" fill="#f4f4f4"/>
<rect x="505.00" y="237.8" width="1.0" height="2.8" fill="#2f8fe6"/>
<rect x="508.55" y="230.0" width="0.9" height="12.5" fill="#e2e2e2"/>
<rect x="507.69" y="230.5" width="2.62" height="8.5" fill="#f4f4f4"/>
<rect x="508.50" y="231.3" width="1.0" height="6.8" fill="#d63a3a"/>
<rect x="512.05" y="229.0" width="0.9" height="17.5" fill="#e2e2e2"/>
<rect x="511.19" y="238.0" width="2.62" height="6.5" fill="#f4f4f4"/>
<rect x="512.00" y="238.8" width="1.0" height="4.8" fill="#d63a3a"/>
<rect x="515.55" y="239.5" width="0.9" height="15.0" fill="#e2e2e2"/>
<rect x="514.69" y="243.5" width="2.62" height="0.9" fill="#f4f4f4"/>
<rect x="519.05" y="235.5" width="0.9" height="16.0" fill="#e2e2e2"/>
<rect x="518.19" y="239.5" width="2.62" height="5.0" fill="#f4f4f4"/>
<rect x="519.00" y="240.3" width="1.0" height="3.3" fill="#2f8fe6"/>
<rect x="522.55" y="233.0" width="0.9" height="27.0" fill="#e2e2e2"/>
<rect x="521.69" y="237.5" width="2.62" height="22.0" fill="#f4f4f4"/>
<rect x="522.50" y="238.3" width="1.0" height="20.3" fill="#d63a3a"/>
<rect x="526.05" y="249.5" width="0.9" height="8.5" fill="#e2e2e2"/>
<rect x="525.19" y="252.5" width="2.62" height="5.0" fill="#f4f4f4"/>
<rect x="526.00" y="253.3" width="1.0" height="3.3" fill="#2f8fe6"/>
<rect x="529.55" y="251.0" width="0.9" height="16.5" fill="#e2e2e2"/>
<rect x="528.69" y="252.0" width="2.62" height="0.9" fill="#f4f4f4"/>
<rect x="533.05" y="244.0" width="0.9" height="13.0" fill="#e2e2e2"/>
<rect x="532.19" y="249.5" width="2.62" height="0.9" fill="#f4f4f4"/>
<rect x="536.55" y="248.0" width="0.9" height="17.5" fill="#e2e2e2"/>
<rect x="535.69" y="253.5" width="2.62" height="10.0" fill="#f4f4f4"/>
<rect x="536.50" y="254.3" width="1.0" height="8.3" fill="#d63a3a"/>
<rect x="540.05" y="246.0" width="0.9" height="16.5" fill="#e2e2e2"/>
<rect x="539.19" y="248.0" width="2.62" height="13.5" fill="#f4f4f4"/>
<rect x="540.00" y="248.8" width="1.0" height="11.8" fill="#2f8fe6"/>
<rect x="543.55" y="220.0" width="0.9" height="29.5" fill="#e2e2e2"/>
<rect x="542.69" y="222.5" width="2.62" height="26.5" fill="#f4f4f4"/>
<rect x="543.50" y="223.3" width="1.0" height="24.8" fill="#2f8fe6"/>
<rect x="547.05" y="201.0" width="0.9" height="27.5" fill="#e2e2e2"/>
<rect x="546.19" y="214.0" width="2.62" height="8.5" fill="#f4f4f4"/>
<rect x="547.00" y="214.8" width="1.0" height="6.8" fill="#2f8fe6"/>
<rect x="550.55" y="207.5" width="0.9" height="14.5" fill="#e2e2e2"/>
<rect x="549.69" y="212.8" width="2.62" height="0.9" fill="#f4f4f4"/>
<rect x="554.05" y="204.0" width="0.9" height="14.0" fill="#e2e2e2"/>
<rect x="553.19" y="209.0" width="2.62" height="5.0" fill="#f4f4f4"/>
<rect x="554.00" y="209.8" width="1.0" height="3.3" fill="#2f8fe6"/>
<rect x="557.55" y="210.0" width="0.9" height="12.0" fill="#e2e2e2"/>
<rect x="556.69" y="210.5" width="2.62" height="8.0" fill="#f4f4f4"/>
<rect x="557.50" y="211.3" width="1.0" height="6.3" fill="#d63a3a"/>
<rect x="561.05" y="213.5" width="0.9" height="12.0" fill="#e2e2e2"/>
<rect x="560.19" y="216.5" width="2.62" height="0.9" fill="#f4f4f4"/>
<rect x="564.55" y="199.5" width="0.9" height="21.5" fill="#e2e2e2"/>
<rect x="563.69" y="200.5" width="2.62" height="20.0" fill="#f4f4f4"/>
<rect x="564.50" y="201.3" width="1.0" height="18.3" fill="#2f8fe6"/>
<rect x="568.05" y="192.0" width="0.9" height="13.5" fill="#e2e2e2"/>
<rect x="567.19" y="201.2" width="2.62" height="2.6" fill="#f4f4f4"/>
<rect x="568.00" y="202.0" width="1.0" height="0.9" fill="#d63a3a"/>
<rect x="571.55" y="197.0" width="0.9" height="13.5" fill="#e2e2e2"/>
<rect x="570.69" y="201.5" width="2.62" height="0.9" fill="#f4f4f4"/>
<rect x="575.05" y="188.0" width="0.9" height="20.0" fill="#e2e2e2"/>
<rect x="574.19" y="189.0" width="2.62" height="10.5" fill="#f4f4f4"/>
<rect x="575.00" y="189.8" width="1.0" height="8.8" fill="#2f8fe6"/>
<rect x="578.55" y="186.0" width="0.9" height="17.5" fill="#e2e2e2"/>
<rect x="577.69" y="188.0" width="2.62" height="14.0" fill="#f4f4f4"/>
<rect x="578.50" y="188.8" width="1.0" height="12.3" fill="#d63a3a"/>
<rect x="582.05" y="199.0" width="0.9" height="10.0" fill="#e2e2e2"/>
<rect x="581.19" y="199.5" width="2.62" height="0.9" fill="#f4f4f4"/>
<rect x="585.55" y="191.0" width="0.9" height="8.5" fill="#e2e2e2"/>
<rect x="584.69" y="193.5" width="2.62" height="4.0" fill="#f4f4f4"/>
<rect x="585.50" y="194.3" width="1.0" height="2.3" fill="#2f8fe6"/>
<rect x="589.05" y="191.5" width="0.9" height="7.5" fill="#e2e2e2"/>
<rect x="588.19" y="195.0" width="2.62" height="0.9" fill="#f4f4f4"/>
<rect x="592.55" y="175.0" width="0.9" height="29.5" fill="#e2e2e2"/>
<rect x="591.69" y="185.0" width="2.62" height="10.5" fill="#f4f4f4"/>
<rect x="592.50" y="185.8" width="1.0" height="8.8" fill="#2f8fe6"/>
<rect x="596.05" y="182.0" width="0.9" height="23.5" fill="#e2e2e2"/>
<rect x="595.19" y="185.5" width="2.62" height="14.0" fill="#f4f4f4"/>
<rect x="596.00" y="186.3" width="1.0" height="12.3" fill="#d63a3a"/>
<rect x="599.55" y="196.0" width="0.9" height="12.5" fill="#e2e2e2"/>
<rect x="598.69" y="200.1" width="2.62" height="2.6" fill="#f4f4f4"/>
<rect x="599.50" y="200.9" width="1.0" height="0.9" fill="#d63a3a"/>
<rect x="603.05" y="191.0" width="0.9" height="17.0" fill="#e2e2e2"/>
<rect x="602.19" y="195.2" width="2.62" height="7.3" fill="#f4f4f4"/>
<rect x="603.00" y="196.0" width="1.0" height="5.6" fill="#2f8fe6"/>
<rect x="606.55" y="181.0" width="0.9" height="19.0" fill="#e2e2e2"/>
<rect x="605.69" y="183.0" width="2.62" height="11.5" fill="#f4f4f4"/>
<rect x="606.50" y="183.8" width="1.0" height="9.8" fill="#2f8fe6"/>
<rect x="610.05" y="168.0" width="0.9" height="17.0" fill="#e2e2e2"/>
<rect x="609.19" y="176.5" width="2.62" height="7.5" fill="#f4f4f4"/>
<rect x="610.00" y="177.3" width="1.0" height="5.8" fill="#2f8fe6"/>
<rect x="613.55" y="170.0" width="0.9" height="32.0" fill="#e2e2e2"/>
<rect x="612.69" y="172.0" width="2.62" height="4.5" fill="#f4f4f4"/>
<rect x="613.50" y="172.8" width="1.0" height="2.8" fill="#2f8fe6"/>
<rect x="617.05" y="157.0" width="0.9" height="14.0" fill="#e2e2e2"/>
<rect x="616.19" y="158.0" width="2.62" height="12.5" fill="#f4f4f4"/>
<rect x="617.00" y="158.8" width="1.0" height="10.8" fill="#2f8fe6"/>
<rect x="620.55" y="151.5" width="0.9" height="15.5" fill="#e2e2e2"/>
<rect x="619.69" y="157.5" width="2.62" height="0.9" fill="#f4f4f4"/>
<rect x="624.05" y="155.0" width="0.9" height="8.0" fill="#e2e2e2"/>
<rect x="623.19" y="156.5" width="2.62" height="5.5" fill="#f4f4f4"/>
<rect x="624.00" y="157.3" width="1.0" height="3.8" fill="#d63a3a"/>
<rect x="627.55" y="145.5" width="0.9" height="21.0" fill="#e2e2e2"/>
<rect x="626.69" y="146.5" width="2.62" height="14.0" fill="#f4f4f4"/>
<rect x="627.50" y="147.3" width="1.0" height="12.3" fill="#2f8fe6"/>
<rect x="631.05" y="136.0" width="0.9" height="17.0" fill="#e2e2e2"/>
<rect x="630.19" y="147.5" width="2.62" height="4.0" fill="#f4f4f4"/>
<rect x="631.00" y="148.3" width="1.0" height="2.3" fill="#d63a3a"/>
<rect x="634.55" y="137.0" width="0.9" height="19.0" fill="#e2e2e2"/>
<rect x="633.69" y="138.0" width="2.62" height="13.0" fill="#f4f4f4"/>
<rect x="634.50" y="138.8" width="1.0" height="11.3" fill="#2f8fe6"/>
<rect x="638.05" y="125.0" width="0.9" height="15.0" fill="#e2e2e2"/>
<rect x="637.19" y="136.5" width="2.62" height="0.9" fill="#f4f4f4"/>
<rect x="641.55" y="132.0" width="0.9" height="17.0" fill="#e2e2e2"/>
<rect x="640.69" y="136.0" width="2.62" height="9.0" fill="#f4f4f4"/>
<rect x="641.50" y="136.8" width="1.0" height="7.3" fill="#d63a3a"/>
<rect x="645.05" y="135.0" width="0.9" height="16.0" fill="#e2e2e2"/>
<rect x="644.19" y="136.0" width="2.62" height="5.5" fill="#f4f4f4"/>
<rect x="645.00" y="136.8" width="1.0" height="3.8" fill="#2f8fe6"/>
<rect x="648.55" y="126.0" width="0.9" height="14.0" fill="#e2e2e2"/>
<rect x="647.69" y="136.5" width="2.62" height="0.9" fill="#f4f4f4"/>
<rect x="652.05" y="131.0" width="0.9" height="18.0" fill="#e2e2e2"/>
<rect x="651.19" y="133.2" width="2.62" height="2.6" fill="#f4f4f4"/>
<rect x="652.00" y="134.0" width="1.0" height="0.9" fill="#2f8fe6"/>
<rect x="655.55" y="133.0" width="0.9" height="12.5" fill="#e2e2e2"/>
<rect x="654.69" y="133.5" width="2.62" height="10.0" fill="#f4f4f4"/>
<rect x="655.50" y="134.3" width="1.0" height="8.3" fill="#d63a3a"/>
<rect x="659.05" y="142.0" width="0.9" height="30.0" fill="#e2e2e2"/>
<rect x="658.19" y="143.0" width="2.62" height="26.0" fill="#f4f4f4"/>
<rect x="659.00" y="143.8" width="1.0" height="24.3" fill="#d63a3a"/>
<rect x="662.05" y="171.0" width="0.9" height="16.5" fill="#e2e2e2"/>
<rect x="661.19" y="171.5" width="2.62" height="8.0" fill="#f4f4f4"/>
<rect x="662.00" y="172.3" width="1.0" height="6.3" fill="#d63a3a"/>
<rect x="665.55" y="169.0" width="0.9" height="17.5" fill="#e2e2e2"/>
<rect x="664.69" y="174.5" width="2.62" height="3.0" fill="#f4f4f4"/>
<rect x="665.50" y="175.3" width="1.0" height="1.3" fill="#d63a3a"/>
<rect x="669.05" y="151.5" width="0.9" height="32.5" fill="#e2e2e2"/>
<rect x="668.19" y="154.0" width="2.62" height="23.5" fill="#f4f4f4"/>
<rect x="669.00" y="154.8" width="1.0" height="21.8" fill="#2f8fe6"/>
<rect x="672.55" y="139.0" width="0.9" height="24.0" fill="#e2e2e2"/>
<rect x="671.69" y="153.2" width="2.62" height="2.6" fill="#f4f4f4"/>
<rect x="672.50" y="154.0" width="1.0" height="0.9" fill="#2f8fe6"/>
<rect x="676.05" y="151.5" width="0.9" height="17.5" fill="#e2e2e2"/>
<rect x="675.19" y="154.0" width="2.62" height="12.0" fill="#f4f4f4"/>
<rect x="676.00" y="154.8" width="1.0" height="10.3" fill="#d63a3a"/>
<rect x="679.55" y="162.0" width="0.9" height="18.5" fill="#e2e2e2"/>
<rect x="678.69" y="166.0" width="2.62" height="13.0" fill="#f4f4f4"/>
<rect x="679.50" y="166.8" width="1.0" height="11.3" fill="#d63a3a"/>
<rect x="683.05" y="174.0" width="0.9" height="21.0" fill="#e2e2e2"/>
<rect x="682.19" y="177.5" width="2.62" height="4.0" fill="#f4f4f4"/>
<rect x="683.00" y="178.3" width="1.0" height="2.3" fill="#d63a3a"/>
<rect x="686.55" y="169.0" width="0.9" height="19.0" fill="#e2e2e2"/>
<rect x="685.69" y="174.5" width="2.62" height="5.5" fill="#f4f4f4"/>
<rect x="686.50" y="175.3" width="1.0" height="3.8" fill="#2f8fe6"/>
<rect x="690.05" y="157.5" width="0.9" height="21.0" fill="#e2e2e2"/>
<rect x="689.19" y="158.5" width="2.62" height="14.5" fill="#f4f4f4"/>
<rect x="690.00" y="159.3" width="1.0" height="12.8" fill="#2f8fe6"/>
<rect x="693.55" y="156.0" width="0.9" height="15.0" fill="#e2e2e2"/>
<rect x="692.69" y="156.5" width="2.62" height="11.0" fill="#f4f4f4"/>
<rect x="693.50" y="157.3" width="1.0" height="9.3" fill="#d63a3a"/>
<rect x="697.05" y="163.0" width="0.9" height="14.0" fill="#e2e2e2"/>
<rect x="696.19" y="168.5" width="2.62" height="0.9" fill="#f4f4f4"/>
<rect x="700.55" y="160.0" width="0.9" height="18.0" fill="#e2e2e2"/>
<rect x="699.69" y="166.5" width="2.62" height="11.0" fill="#f4f4f4"/>
<rect x="700.50" y="167.3" width="1.0" height="9.3" fill="#d63a3a"/>
<rect x="704.05" y="163.0" width="0.9" height="17.0" fill="#e2e2e2"/>
<rect x="703.19" y="166.0" width="2.62" height="11.5" fill="#f4f4f4"/>
<rect x="704.00" y="166.8" width="1.0" height="9.8" fill="#2f8fe6"/>
<rect x="707.55" y="162.0" width="0.9" height="13.0" fill="#e2e2e2"/>
<rect x="706.69" y="166.0" width="2.62" height="6.0" fill="#f4f4f4"/>
<rect x="707.50" y="166.8" width="1.0" height="4.3" fill="#d63a3a"/>
<rect x="711.05" y="171.0" width="0.9" height="31.0" fill="#e2e2e2"/>
<rect x="710.19" y="172.0" width="2.62" height="27.5" fill="#f4f4f4"/>
<rect x="711.00" y="172.8" width="1.0" height="25.8" fill="#d63a3a"/>
<rect x="714.55" y="177.0" width="0.9" height="32.0" fill="#e2e2e2"/>
<rect x="713.69" y="179.0" width="2.62" height="22.5" fill="#f4f4f4"/>
<rect x="714.50" y="179.8" width="1.0" height="20.8" fill="#2f8fe6"/>
<rect x="718.05" y="176.0" width="0.9" height="12.0" fill="#e2e2e2"/>
<rect x="717.19" y="182.5" width="2.62" height="0.9" fill="#f4f4f4"/>
<rect x="721.55" y="178.5" width="0.9" height="17.5" fill="#e2e2e2"/>
<rect x="720.69" y="184.5" width="2.62" height="10.5" fill="#f4f4f4"/>
<rect x="721.50" y="185.3" width="1.0" height="8.8" fill="#d63a3a"/>
<rect x="725.05" y="189.0" width="0.9" height="17.5" fill="#e2e2e2"/>
<rect x="724.19" y="191.5" width="2.62" height="14.5" fill="#f4f4f4"/>
<rect x="725.00" y="192.3" width="1.0" height="12.8" fill="#d63a3a"/>
<rect x="728.55" y="177.0" width="0.9" height="24.5" fill="#e2e2e2"/>
<rect x="727.69" y="177.5" width="2.62" height="23.0" fill="#f4f4f4"/>
<rect x="728.50" y="178.3" width="1.0" height="21.3" fill="#2f8fe6"/>
<rect x="732.05" y="182.0" width="0.9" height="15.0" fill="#e2e2e2"/>
<rect x="731.19" y="185.5" width="2.62" height="6.5" fill="#f4f4f4"/>
<rect x="732.00" y="186.3" width="1.0" height="4.8" fill="#2f8fe6"/>
<rect x="735.55" y="166.0" width="0.9" height="27.5" fill="#e2e2e2"/>
<rect x="734.69" y="168.0" width="2.62" height="17.5" fill="#f4f4f4"/>
<rect x="735.50" y="168.8" width="1.0" height="15.8" fill="#2f8fe6"/>
<rect x="739.05" y="150.5" width="0.9" height="21.5" fill="#e2e2e2"/>
<rect x="738.19" y="159.5" width="2.62" height="9.0" fill="#f4f4f4"/>
<rect x="739.00" y="160.3" width="1.0" height="7.3" fill="#2f8fe6"/>
<rect x="742.55" y="149.0" width="0.9" height="12.0" fill="#e2e2e2"/>
<rect x="741.69" y="156.9" width="2.62" height="2.6" fill="#f4f4f4"/>
<rect x="742.50" y="157.8" width="1.0" height="0.9" fill="#2f8fe6"/>
<rect x="746.05" y="135.0" width="0.9" height="25.0" fill="#e2e2e2"/>
<rect x="745.19" y="140.5" width="2.62" height="15.5" fill="#f4f4f4"/>
<rect x="746.00" y="141.3" width="1.0" height="13.8" fill="#2f8fe6"/>
<rect x="749.55" y="141.0" width="0.9" height="19.0" fill="#e2e2e2"/>
<rect x="748.69" y="147.0" width="2.62" height="11.5" fill="#f4f4f4"/>
<rect x="749.50" y="147.8" width="1.0" height="9.8" fill="#d63a3a"/>
<rect x="753.05" y="145.5" width="0.9" height="20.0" fill="#e2e2e2"/>
<rect x="752.19" y="153.5" width="2.62" height="3.0" fill="#f4f4f4"/>
<rect x="753.00" y="154.3" width="1.0" height="1.3" fill="#2f8fe6"/>
<rect x="756.55" y="148.0" width="0.9" height="8.0" fill="#e2e2e2"/>
<rect x="755.69" y="149.0" width="2.62" height="4.5" fill="#f4f4f4"/>
<rect x="756.50" y="149.8" width="1.0" height="2.8" fill="#2f8fe6"/>
<rect x="760.05" y="146.0" width="0.9" height="13.5" fill="#e2e2e2"/>
<rect x="759.19" y="151.0" width="2.62" height="4.5" fill="#f4f4f4"/>
<rect x="760.00" y="151.8" width="1.0" height="2.8" fill="#d63a3a"/>
<rect x="763.55" y="154.5" width="0.9" height="14.5" fill="#e2e2e2"/>
<rect x="762.69" y="155.5" width="2.62" height="5.0" fill="#f4f4f4"/>
<rect x="763.50" y="156.3" width="1.0" height="3.3" fill="#d63a3a"/>
<rect x="767.05" y="148.0" width="0.9" height="14.0" fill="#e2e2e2"/>
<rect x="766.19" y="149.0" width="2.62" height="12.5" fill="#f4f4f4"/>
<rect x="767.00" y="149.8" width="1.0" height="10.8" fill="#2f8fe6"/>
<rect x="770.55" y="139.5" width="0.9" height="11.5" fill="#e2e2e2"/>
<rect x="769.69" y="141.0" width="2.62" height="9.0" fill="#f4f4f4"/>
<rect x="770.50" y="141.8" width="1.0" height="7.3" fill="#2f8fe6"/>
<rect x="774.05" y="144.0" width="0.9" height="58.0" fill="#e2e2e2"/>
<rect x="773.19" y="144.5" width="2.62" height="47.0" fill="#f4f4f4"/>
<rect x="774.00" y="145.3" width="1.0" height="45.3" fill="#d63a3a"/>
<rect x="777.55" y="180.0" width="0.9" height="26.5" fill="#e2e2e2"/>
<rect x="776.69" y="188.5" width="2.62" height="3.5" fill="#f4f4f4"/>
<rect x="777.50" y="189.3" width="1.0" height="1.8" fill="#2f8fe6"/>
<rect x="781.05" y="172.0" width="0.9" height="28.5" fill="#e2e2e2"/>
<rect x="780.19" y="182.5" width="2.62" height="6.0" fill="#f4f4f4"/>
<rect x="781.00" y="183.3" width="1.0" height="4.3" fill="#2f8fe6"/>
<rect x="784.55" y="178.0" width="0.9" height="40.0" fill="#e2e2e2"/>
<rect x="783.69" y="181.5" width="2.62" height="32.0" fill="#f4f4f4"/>
<rect x="784.50" y="182.3" width="1.0" height="30.3" fill="#d63a3a"/>
<rect x="788.05" y="205.0" width="0.9" height="15.0" fill="#e2e2e2"/>
<rect x="787.19" y="212.5" width="2.62" height="4.0" fill="#f4f4f4"/>
<rect x="788.00" y="213.3" width="1.0" height="2.3" fill="#d63a3a"/>
<rect x="791.55" y="200.0" width="0.9" height="21.5" fill="#e2e2e2"/>
<rect x="790.69" y="202.5" width="2.62" height="14.0" fill="#f4f4f4"/>
<rect x="791.50" y="203.3" width="1.0" height="12.3" fill="#2f8fe6"/>
<rect x="795.05" y="194.0" width="0.9" height="21.0" fill="#e2e2e2"/>
<rect x="794.19" y="203.5" width="2.62" height="3.5" fill="#f4f4f4"/>
<rect x="795.00" y="204.3" width="1.0" height="1.8" fill="#d63a3a"/>
<rect x="798.55" y="198.0" width="0.9" height="13.0" fill="#e2e2e2"/>
<rect x="797.69" y="203.4" width="2.62" height="2.6" fill="#f4f4f4"/>
<rect x="798.50" y="204.3" width="1.0" height="0.9" fill="#2f8fe6"/>
<rect x="802.05" y="187.0" width="0.9" height="21.5" fill="#e2e2e2"/>
<rect x="801.19" y="200.8" width="2.62" height="2.6" fill="#f4f4f4"/>
<rect x="802.00" y="201.7" width="1.0" height="0.9" fill="#d63a3a"/>
<rect x="805.55" y="192.0" width="0.9" height="14.5" fill="#e2e2e2"/>
<rect x="804.69" y="196.5" width="2.62" height="5.5" fill="#f4f4f4"/>
<rect x="805.50" y="197.3" width="1.0" height="3.8" fill="#2f8fe6"/>
<rect x="809.05" y="185.0" width="0.9" height="13.0" fill="#e2e2e2"/>
<rect x="808.19" y="187.5" width="2.62" height="3.0" fill="#f4f4f4"/>
<rect x="809.00" y="188.3" width="1.0" height="1.3" fill="#2f8fe6"/>
<rect x="812.55" y="178.5" width="0.9" height="11.5" fill="#e2e2e2"/>
<rect x="811.69" y="181.3" width="2.62" height="2.6" fill="#f4f4f4"/>
<rect x="812.50" y="182.1" width="1.0" height="0.9" fill="#d63a3a"/>
<rect x="816.05" y="178.0" width="0.9" height="11.0" fill="#e2e2e2"/>
<rect x="815.19" y="181.3" width="2.62" height="2.6" fill="#f4f4f4"/>
<rect x="816.00" y="182.1" width="1.0" height="0.9" fill="#d63a3a"/>
<rect x="819.55" y="174.0" width="0.9" height="12.5" fill="#e2e2e2"/>
<rect x="818.69" y="177.0" width="2.62" height="6.5" fill="#f4f4f4"/>
<rect x="819.50" y="177.8" width="1.0" height="4.8" fill="#2f8fe6"/>
<rect x="823.05" y="174.5" width="0.9" height="20.0" fill="#e2e2e2"/>
<rect x="822.19" y="176.0" width="2.62" height="16.5" fill="#f4f4f4"/>
<rect x="823.00" y="176.8" width="1.0" height="14.8" fill="#d63a3a"/>
<rect x="826.55" y="191.5" width="0.9" height="20.5" fill="#e2e2e2"/>
<rect x="825.69" y="192.5" width="2.62" height="15.5" fill="#f4f4f4"/>
<rect x="826.50" y="193.3" width="1.0" height="13.8" fill="#d63a3a"/>
<rect x="830.05" y="195.0" width="0.9" height="20.0" fill="#e2e2e2"/>
<rect x="829.19" y="199.5" width="2.62" height="7.5" fill="#f4f4f4"/>
<rect x="830.00" y="200.3" width="1.0" height="5.8" fill="#2f8fe6"/>
<rect x="833.55" y="195.0" width="0.9" height="13.0" fill="#e2e2e2"/>
<rect x="832.69" y="199.5" width="2.62" height="0.9" fill="#f4f4f4"/>
<rect x="837.05" y="187.0" width="0.9" height="14.5" fill="#e2e2e2"/>
<rect x="836.19" y="196.5" width="2.62" height="3.5" fill="#f4f4f4"/>
<rect x="837.00" y="197.3" width="1.0" height="1.8" fill="#2f8fe6"/>
<rect x="840.55" y="183.0" width="0.9" height="14.0" fill="#e2e2e2"/>
<rect x="839.69" y="187.5" width="2.62" height="9.0" fill="#f4f4f4"/>
<rect x="840.50" y="188.3" width="1.0" height="7.3" fill="#2f8fe6"/>
<rect x="844.05" y="183.0" width="0.9" height="34.0" fill="#e2e2e2"/>
<rect x="843.19" y="187.0" width="2.62" height="23.5" fill="#f4f4f4"/>
<rect x="844.00" y="187.8" width="1.0" height="21.8" fill="#d63a3a"/>
<rect x="847.55" y="203.0" width="0.9" height="11.5" fill="#e2e2e2"/>
<rect x="846.69" y="210.5" width="2.62" height="3.0" fill="#f4f4f4"/>
<rect x="847.50" y="211.3" width="1.0" height="1.3" fill="#d63a3a"/>
<rect x="851.05" y="201.0" width="0.9" height="19.0" fill="#e2e2e2"/>
<rect x="850.19" y="203.5" width="2.62" height="10.0" fill="#f4f4f4"/>
<rect x="851.00" y="204.3" width="1.0" height="8.3" fill="#2f8fe6"/>
<rect x="854.55" y="201.0" width="0.9" height="22.0" fill="#e2e2e2"/>
<rect x="853.69" y="204.8" width="2.62" height="0.9" fill="#f4f4f4"/>
<rect x="858.05" y="192.5" width="0.9" height="19.5" fill="#e2e2e2"/>
<rect x="857.19" y="205.0" width="2.62" height="6.5" fill="#f4f4f4"/>
<rect x="858.00" y="205.8" width="1.0" height="4.8" fill="#d63a3a"/>
<rect x="861.55" y="208.0" width="0.9" height="22.5" fill="#e2e2e2"/>
<rect x="860.69" y="211.0" width="2.62" height="14.5" fill="#f4f4f4"/>
<rect x="861.50" y="211.8" width="1.0" height="12.8" fill="#d63a3a"/>
<rect x="865.05" y="218.0" width="0.9" height="10.0" fill="#e2e2e2"/>
<rect x="864.19" y="219.0" width="2.62" height="8.5" fill="#f4f4f4"/>
<rect x="865.00" y="219.8" width="1.0" height="6.8" fill="#2f8fe6"/>
<rect x="868.55" y="207.0" width="0.9" height="13.5" fill="#e2e2e2"/>
<rect x="867.69" y="215.5" width="2.62" height="4.5" fill="#f4f4f4"/>
<rect x="868.50" y="216.3" width="1.0" height="2.8" fill="#2f8fe6"/>
<rect x="872.05" y="205.0" width="0.9" height="15.0" fill="#e2e2e2"/>
<rect x="871.19" y="211.5" width="2.62" height="4.0" fill="#f4f4f4"/>
<rect x="872.00" y="212.3" width="1.0" height="2.3" fill="#2f8fe6"/>
<rect x="875.55" y="203.0" width="0.9" height="9.0" fill="#e2e2e2"/>
<rect x="874.69" y="205.0" width="2.62" height="6.5" fill="#f4f4f4"/>
<rect x="875.50" y="205.8" width="1.0" height="4.8" fill="#2f8fe6"/>
<rect x="879.05" y="178.5" width="0.9" height="26.0" fill="#e2e2e2"/>
<rect x="878.19" y="179.5" width="2.62" height="24.0" fill="#f4f4f4"/>
<rect x="879.00" y="180.3" width="1.0" height="22.3" fill="#2f8fe6"/>
<rect x="882.55" y="179.0" width="0.9" height="8.5" fill="#e2e2e2"/>
<rect x="881.69" y="181.5" width="2.62" height="0.9" fill="#f4f4f4"/>
<rect x="886.05" y="165.0" width="0.9" height="17.0" fill="#e2e2e2"/>
<rect x="885.19" y="173.0" width="2.62" height="8.5" fill="#f4f4f4"/>
<rect x="886.00" y="173.8" width="1.0" height="6.8" fill="#2f8fe6"/>
<rect x="889.55" y="164.5" width="0.9" height="10.5" fill="#e2e2e2"/>
<rect x="888.69" y="165.5" width="2.62" height="7.0" fill="#f4f4f4"/>
<rect x="889.50" y="166.3" width="1.0" height="5.3" fill="#2f8fe6"/>
<rect x="893.05" y="158.5" width="0.9" height="13.0" fill="#e2e2e2"/>
<rect x="892.19" y="164.0" width="2.62" height="5.5" fill="#f4f4f4"/>
<rect x="893.00" y="164.8" width="1.0" height="3.8" fill="#d63a3a"/>
<rect x="896.55" y="153.5" width="0.9" height="19.0" fill="#e2e2e2"/>
<rect x="895.69" y="154.0" width="2.62" height="14.0" fill="#f4f4f4"/>
<rect x="896.50" y="154.8" width="1.0" height="12.3" fill="#2f8fe6"/>
<rect x="900.05" y="148.0" width="0.9" height="9.0" fill="#e2e2e2"/>
<rect x="899.19" y="153.2" width="2.62" height="2.6" fill="#f4f4f4"/>
<rect x="900.00" y="154.0" width="1.0" height="0.9" fill="#2f8fe6"/>
<rect x="903.55" y="149.0" width="0.9" height="10.0" fill="#e2e2e2"/>
<rect x="902.69" y="154.0" width="2.62" height="0.9" fill="#f4f4f4"/>
<rect x="907.05" y="146.0" width="0.9" height="13.0" fill="#e2e2e2"/>
<rect x="906.19" y="150.9" width="2.62" height="2.6" fill="#f4f4f4"/>
<rect x="907.00" y="151.8" width="1.0" height="0.9" fill="#2f8fe6"/>
<rect x="910.55" y="133.0" width="0.9" height="24.5" fill="#e2e2e2"/>
<rect x="909.69" y="150.9" width="2.62" height="2.6" fill="#f4f4f4"/>
<rect x="910.50" y="151.8" width="1.0" height="0.9" fill="#d63a3a"/>
<rect x="914.05" y="150.0" width="0.9" height="13.0" fill="#e2e2e2"/>
<rect x="913.19" y="152.5" width="2.62" height="8.0" fill="#f4f4f4"/>
<rect x="914.00" y="153.3" width="1.0" height="6.3" fill="#d63a3a"/>
<rect x="917.55" y="154.0" width="0.9" height="22.0" fill="#e2e2e2"/>
<rect x="916.69" y="162.0" width="2.62" height="4.0" fill="#f4f4f4"/>
<rect x="917.50" y="162.8" width="1.0" height="2.3" fill="#d63a3a"/>
<rect x="921.05" y="159.5" width="0.9" height="13.5" fill="#e2e2e2"/>
<rect x="920.19" y="161.0" width="2.62" height="4.0" fill="#f4f4f4"/>
<rect x="921.00" y="161.8" width="1.0" height="2.3" fill="#2f8fe6"/>
<rect x="924.55" y="152.0" width="0.9" height="11.0" fill="#e2e2e2"/>
<rect x="923.69" y="158.5" width="2.62" height="0.9" fill="#f4f4f4"/>
<rect x="928.05" y="135.0" width="0.9" height="24.0" fill="#e2e2e2"/>
<rect x="927.19" y="136.0" width="2.62" height="22.0" fill="#f4f4f4"/>
<rect x="928.00" y="136.8" width="1.0" height="20.3" fill="#2f8fe6"/>
<rect x="931.55" y="129.5" width="0.9" height="15.0" fill="#e2e2e2"/>
<rect x="930.69" y="133.0" width="2.62" height="5.0" fill="#f4f4f4"/>
<rect x="931.50" y="133.8" width="1.0" height="3.3" fill="#2f8fe6"/>
<rect x="935.05" y="133.5" width="0.9" height="19.5" fill="#e2e2e2"/>
<rect x="934.19" y="134.5" width="2.62" height="13.0" fill="#f4f4f4"/>
<rect x="935.00" y="135.3" width="1.0" height="11.3" fill="#d63a3a"/>
<rect x="938.55" y="142.0" width="0.9" height="16.5" fill="#e2e2e2"/>
<rect x="937.69" y="146.0" width="2.62" height="4.5" fill="#f4f4f4"/>
<rect x="938.50" y="146.8" width="1.0" height="2.8" fill="#d63a3a"/>
<rect x="942.05" y="142.5" width="0.9" height="12.5" fill="#e2e2e2"/>
<rect x="941.19" y="150.7" width="2.62" height="2.6" fill="#f4f4f4"/>
<rect x="942.00" y="151.5" width="1.0" height="0.9" fill="#d63a3a"/>
<rect x="945.55" y="133.0" width="0.9" height="23.5" fill="#e2e2e2"/>
<rect x="944.69" y="142.0" width="2.62" height="12.5" fill="#f4f4f4"/>
<rect x="945.50" y="142.8" width="1.0" height="10.8" fill="#2f8fe6"/>
<rect x="949.05" y="140.5" width="0.9" height="12.0" fill="#e2e2e2"/>
<rect x="948.19" y="142.5" width="2.62" height="5.0" fill="#f4f4f4"/>
<rect x="949.00" y="143.3" width="1.0" height="3.3" fill="#2f8fe6"/>
<rect x="952.55" y="137.5" width="0.9" height="14.0" fill="#e2e2e2"/>
<rect x="951.69" y="142.5" width="2.62" height="8.0" fill="#f4f4f4"/>
<rect x="952.50" y="143.3" width="1.0" height="6.3" fill="#d63a3a"/>
<rect x="956.05" y="135.0" width="0.9" height="20.0" fill="#e2e2e2"/>
<rect x="955.19" y="149.5" width="2.62" height="0.9" fill="#f4f4f4"/>
<rect x="959.55" y="122.5" width="0.9" height="18.5" fill="#e2e2e2"/>
<rect x="958.69" y="123.0" width="2.62" height="15.5" fill="#f4f4f4"/>
<rect x="959.50" y="123.8" width="1.0" height="13.8" fill="#2f8fe6"/>
<rect x="963.05" y="112.0" width="0.9" height="14.0" fill="#e2e2e2"/>
<rect x="962.19" y="121.5" width="2.62" height="3.5" fill="#f4f4f4"/>
<rect x="963.00" y="122.3" width="1.0" height="1.8" fill="#2f8fe6"/>
<rect x="966.55" y="115.0" width="0.9" height="10.5" fill="#e2e2e2"/>
<rect x="965.69" y="119.5" width="2.62" height="2.6" fill="#f4f4f4"/>
<rect x="966.50" y="120.3" width="1.0" height="0.9" fill="#2f8fe6"/>
<rect x="970.05" y="111.5" width="0.9" height="11.5" fill="#e2e2e2"/>
<rect x="969.19" y="117.5" width="2.62" height="0.9" fill="#f4f4f4"/>
<rect x="973.55" y="96.0" width="0.9" height="22.0" fill="#e2e2e2"/>
<rect x="972.69" y="101.0" width="2.62" height="15.5" fill="#f4f4f4"/>
<rect x="973.50" y="101.8" width="1.0" height="13.8" fill="#2f8fe6"/>
<rect x="977.05" y="75.0" width="0.9" height="30.0" fill="#e2e2e2"/>
<rect x="976.19" y="80.5" width="2.62" height="19.0" fill="#f4f4f4"/>
<rect x="977.00" y="81.3" width="1.0" height="17.3" fill="#2f8fe6"/>
<rect x="980.55" y="75.5" width="0.9" height="11.5" fill="#e2e2e2"/>
<rect x="979.69" y="80.5" width="2.62" height="3.0" fill="#f4f4f4"/>
<rect x="980.50" y="81.3" width="1.0" height="1.3" fill="#d63a3a"/>
<rect x="984.05" y="61.5" width="0.9" height="29.0" fill="#e2e2e2"/>
<rect x="983.19" y="69.5" width="2.62" height="12.0" fill="#f4f4f4"/>
<rect x="984.00" y="70.3" width="1.0" height="10.3" fill="#2f8fe6"/>
<rect x="987.55" y="64.0" width="0.9" height="24.5" fill="#e2e2e2"/>
<rect x="986.69" y="70.0" width="2.62" height="11.0" fill="#f4f4f4"/>
<rect x="987.50" y="70.8" width="1.0" height="9.3" fill="#d63a3a"/>
<rect x="991.05" y="78.0" width="0.9" height="12.5" fill="#e2e2e2"/>
<rect x="990.19" y="81.0" width="2.62" height="8.0" fill="#f4f4f4"/>
<rect x="991.00" y="81.8" width="1.0" height="6.3" fill="#d63a3a"/>
<rect x="994.55" y="90.0" width="0.9" height="14.0" fill="#e2e2e2"/>
<rect x="993.69" y="91.5" width="2.62" height="5.0" fill="#f4f4f4"/>
<rect x="994.50" y="92.3" width="1.0" height="3.3" fill="#2f8fe6"/>
<rect x="998.05" y="74.5" width="0.9" height="18.0" fill="#e2e2e2"/>
<rect x="997.19" y="81.0" width="2.62" height="9.5" fill="#f4f4f4"/>
<rect x="998.00" y="81.8" width="1.0" height="7.8" fill="#2f8fe6"/>
<rect x="1001.55" y="77.5" width="0.9" height="30.0" fill="#e2e2e2"/>
<rect x="1000.69" y="80.0" width="2.62" height="25.5" fill="#f4f4f4"/>
<rect x="1001.50" y="80.8" width="1.0" height="23.8" fill="#d63a3a"/>
<rect x="1005.05" y="103.5" width="0.9" height="29.0" fill="#e2e2e2"/>
<rect x="1004.19" y="104.5" width="2.62" height="22.5" fill="#f4f4f4"/>
<rect x="1005.00" y="105.3" width="1.0" height="20.8" fill="#d63a3a"/>
<rect x="1008.55" y="116.0" width="0.9" height="22.5" fill="#e2e2e2"/>
<rect x="1007.69" y="124.7" width="2.62" height="2.6" fill="#f4f4f4"/>
<rect x="1008.50" y="125.5" width="1.0" height="0.9" fill="#2f8fe6"/>
<rect x="1012.05" y="111.0" width="0.9" height="21.5" fill="#e2e2e2"/>
<rect x="1011.19" y="111.5" width="2.62" height="11.5" fill="#f4f4f4"/>
<rect x="1012.00" y="112.3" width="1.0" height="9.8" fill="#d63a3a"/>
<rect x="1015.55" y="112.0" width="0.9" height="20.5" fill="#e2e2e2"/>
<rect x="1014.69" y="114.5" width="2.62" height="7.0" fill="#f4f4f4"/>
<rect x="1015.50" y="115.3" width="1.0" height="5.3" fill="#2f8fe6"/>
<rect x="1019.05" y="111.5" width="0.9" height="27.5" fill="#e2e2e2"/>
<rect x="1018.19" y="113.0" width="2.62" height="14.5" fill="#f4f4f4"/>
<rect x="1019.00" y="113.8" width="1.0" height="12.8" fill="#d63a3a"/>
<rect x="1022.55" y="127.5" width="0.9" height="17.0" fill="#e2e2e2"/>
<rect x="1021.69" y="128.0" width="2.62" height="10.0" fill="#f4f4f4"/>
<rect x="1022.50" y="128.8" width="1.0" height="8.3" fill="#d63a3a"/>
<rect x="1026.05" y="122.0" width="0.9" height="17.0" fill="#e2e2e2"/>
<rect x="1025.19" y="131.0" width="2.62" height="5.5" fill="#f4f4f4"/>
<rect x="1026.00" y="131.8" width="1.0" height="3.8" fill="#2f8fe6"/>
<rect x="1029.55" y="126.0" width="0.9" height="15.5" fill="#e2e2e2"/>
<rect x="1028.69" y="130.0" width="2.62" height="3.0" fill="#f4f4f4"/>
<rect x="1029.50" y="130.8" width="1.0" height="1.3" fill="#2f8fe6"/>
<rect x="1033.05" y="129.5" width="0.9" height="43.5" fill="#e2e2e2"/>
<rect x="1032.19" y="130.0" width="2.62" height="40.0" fill="#f4f4f4"/>
<rect x="1033.00" y="130.8" width="1.0" height="38.3" fill="#d63a3a"/>
<rect x="1036.55" y="157.0" width="0.9" height="24.0" fill="#e2e2e2"/>
<rect x="1035.69" y="172.0" width="2.62" height="3.5" fill="#f4f4f4"/>
<rect x="1036.50" y="172.8" width="1.0" height="1.8" fill="#d63a3a"/>
<rect x="1040.05" y="160.0" width="0.9" height="18.5" fill="#e2e2e2"/>
<rect x="1039.19" y="166.5" width="2.62" height="9.0" fill="#f4f4f4"/>
<rect x="1040.00" y="167.3" width="1.0" height="7.3" fill="#2f8fe6"/>
<rect x="1043.55" y="151.5" width="0.9" height="22.5" fill="#e2e2e2"/>
<rect x="1042.69" y="153.0" width="2.62" height="13.5" fill="#f4f4f4"/>
<rect x="1043.50" y="153.8" width="1.0" height="11.8" fill="#2f8fe6"/>
<rect x="1047.05" y="151.0" width="0.9" height="15.0" fill="#e2e2e2"/>
<rect x="1046.19" y="152.0" width="2.62" height="11.5" fill="#f4f4f4"/>
<rect x="1047.00" y="152.8" width="1.0" height="9.8" fill="#d63a3a"/>
<rect x="1050.55" y="158.0" width="0.9" height="21.5" fill="#e2e2e2"/>
<rect x="1049.69" y="162.5" width="2.62" height="8.0" fill="#f4f4f4"/>
<rect x="1050.50" y="163.3" width="1.0" height="6.3" fill="#d63a3a"/>
<rect x="1054.05" y="160.0" width="0.9" height="27.0" fill="#e2e2e2"/>
<rect x="1053.19" y="168.5" width="2.62" height="18.0" fill="#f4f4f4"/>
<rect x="1054.00" y="169.3" width="1.0" height="16.3" fill="#d63a3a"/>
<rect x="1057.55" y="182.5" width="0.9" height="25.0" fill="#e2e2e2"/>
<rect x="1056.69" y="185.0" width="2.62" height="21.0" fill="#f4f4f4"/>
<rect x="1057.50" y="185.8" width="1.0" height="19.3" fill="#d63a3a"/>
<rect x="1061.05" y="197.0" width="0.9" height="14.5" fill="#e2e2e2"/>
<rect x="1060.19" y="204.7" width="2.62" height="2.6" fill="#f4f4f4"/>
<rect x="1061.00" y="205.5" width="1.0" height="0.9" fill="#d63a3a"/>
<rect x="1064.55" y="191.0" width="0.9" height="19.5" fill="#e2e2e2"/>
<rect x="1063.69" y="205.2" width="2.62" height="2.6" fill="#f4f4f4"/>
<rect x="1064.50" y="206.0" width="1.0" height="0.9" fill="#2f8fe6"/>
<rect x="1068.05" y="200.0" width="0.9" height="21.0" fill="#e2e2e2"/>
<rect x="1067.19" y="202.0" width="2.62" height="14.5" fill="#f4f4f4"/>
<rect x="1068.00" y="202.8" width="1.0" height="12.8" fill="#d63a3a"/>
<rect x="1071.55" y="197.0" width="0.9" height="22.5" fill="#e2e2e2"/>
<rect x="1070.69" y="212.7" width="2.62" height="2.6" fill="#f4f4f4"/>
<rect x="1071.50" y="213.5" width="1.0" height="0.9" fill="#2f8fe6"/>
<rect x="1075.05" y="201.0" width="0.9" height="27.5" fill="#e2e2e2"/>
<rect x="1074.19" y="212.0" width="2.62" height="12.5" fill="#f4f4f4"/>
<rect x="1075.00" y="212.8" width="1.0" height="10.8" fill="#d63a3a"/>
<rect x="1078.55" y="223.5" width="0.9" height="19.5" fill="#e2e2e2"/>
<rect x="1077.69" y="225.5" width="2.62" height="11.0" fill="#f4f4f4"/>
<rect x="1078.50" y="226.3" width="1.0" height="9.3" fill="#d63a3a"/>
<rect x="1082.05" y="213.5" width="0.9" height="31.5" fill="#e2e2e2"/>
<rect x="1081.19" y="223.5" width="2.62" height="19.5" fill="#f4f4f4"/>
<rect x="1082.00" y="224.3" width="1.0" height="17.8" fill="#d63a3a"/>
<rect x="1085.55" y="236.5" width="0.9" height="52.0" fill="#e2e2e2"/>
<rect x="1084.69" y="242.0" width="2.62" height="40.0" fill="#f4f4f4"/>
<rect x="1085.50" y="242.8" width="1.0" height="38.3" fill="#d63a3a"/>
<rect x="1089.05" y="257.0" width="0.9" height="28.0" fill="#e2e2e2"/>
<rect x="1088.19" y="275.9" width="2.62" height="2.6" fill="#f4f4f4"/>
<rect x="1089.00" y="276.8" width="1.0" height="0.9" fill="#2f8fe6"/>
<rect x="1092.55" y="260.0" width="0.9" height="17.5" fill="#e2e2e2"/>
<rect x="1091.69" y="268.5" width="2.62" height="6.0" fill="#f4f4f4"/>
<rect x="1092.50" y="269.4" width="1.0" height="4.3" fill="#2f8fe6"/>
<rect x="1096.05" y="250.0" width="0.9" height="24.0" fill="#e2e2e2"/>
<rect x="1095.19" y="264.5" width="2.62" height="3.0" fill="#f4f4f4"/>
<rect x="1096.00" y="265.4" width="1.0" height="1.3" fill="#2f8fe6"/>
<rect x="1099.05" y="257.0" width="0.9" height="25.5" fill="#e2e2e2"/>
<rect x="1098.19" y="261.9" width="2.62" height="2.6" fill="#f4f4f4"/>
<rect x="1099.00" y="262.8" width="1.0" height="0.9" fill="#d63a3a"/>
<rect x="1102.55" y="265.0" width="0.9" height="54.0" fill="#e2e2e2"/>
<rect x="1101.69" y="266.0" width="2.62" height="46.0" fill="#f4f4f4"/>
<rect x="1102.50" y="266.9" width="1.0" height="44.3" fill="#d63a3a"/>
<rect x="1106.05" y="286.0" width="0.9" height="21.0" fill="#e2e2e2"/>
<rect x="1105.19" y="297.0" width="2.62" height="9.5" fill="#f4f4f4"/>
<rect x="1106.00" y="297.9" width="1.0" height="7.8" fill="#2f8fe6"/>
<rect x="1109.55" y="294.0" width="0.9" height="15.5" fill="#e2e2e2"/>
<rect x="1108.69" y="296.5" width="2.62" height="11.0" fill="#f4f4f4"/>
<rect x="1109.50" y="297.4" width="1.0" height="9.3" fill="#d63a3a"/>
<rect x="1113.05" y="304.5" width="0.9" height="45.5" fill="#e2e2e2"/>
<rect x="1112.19" y="308.5" width="2.62" height="34.0" fill="#f4f4f4"/>
<rect x="1113.00" y="309.4" width="1.0" height="32.3" fill="#d63a3a"/>
<rect x="1116.55" y="324.0" width="0.9" height="22.0" fill="#e2e2e2"/>
<rect x="1115.69" y="329.0" width="2.62" height="11.0" fill="#f4f4f4"/>
<rect x="1116.50" y="329.9" width="1.0" height="9.3" fill="#2f8fe6"/>
<rect x="1120.05" y="320.0" width="0.9" height="26.0" fill="#e2e2e2"/>
<rect x="1119.19" y="325.5" width="2.62" height="6.0" fill="#f4f4f4"/>
<rect x="1120.00" y="326.4" width="1.0" height="4.3" fill="#2f8fe6"/>
<rect x="1123.55" y="321.0" width="0.9" height="27.0" fill="#e2e2e2"/>
<rect x="1122.69" y="329.0" width="2.62" height="16.5" fill="#f4f4f4"/>
<rect x="1123.50" y="329.9" width="1.0" height="14.8" fill="#d63a3a"/>
<rect x="1127.05" y="329.0" width="0.9" height="30.5" fill="#e2e2e2"/>
<rect x="1126.19" y="339.2" width="2.62" height="0.9" fill="#f4f4f4"/>
<rect x="1130.55" y="331.5" width="0.9" height="25.5" fill="#e2e2e2"/>
<rect x="1129.69" y="336.5" width="2.62" height="9.0" fill="#f4f4f4"/>
<rect x="1130.50" y="337.4" width="1.0" height="7.3" fill="#d63a3a"/>
<rect x="1134.05" y="309.0" width="0.9" height="22.0" fill="#e2e2e2"/>
<rect x="1133.19" y="316.9" width="2.62" height="2.6" fill="#f4f4f4"/>
<rect x="1134.00" y="317.8" width="1.0" height="0.9" fill="#2f8fe6"/>
<rect x="1137.55" y="302.0" width="0.9" height="17.0" fill="#e2e2e2"/>
<rect x="1136.69" y="303.0" width="2.62" height="15.0" fill="#f4f4f4"/>
<rect x="1137.50" y="303.9" width="1.0" height="13.3" fill="#2f8fe6"/>
<line x1="1186.8" y1="350.0" x2="1298.7" y2="93.4" stroke="#d0d0d0" stroke-width="1.1"/>
<line x1="1298.7" y1="93.4" x2="1330.5" y2="39.4" stroke="#d0d0d0" stroke-width="1.1"/>
<line x1="1235.3" y1="237.6" x2="1198.4" y2="271.7" stroke="#d0d0d0" stroke-width="1.1"/>
<line x1="1235.3" y1="237.6" x2="1239.4" y2="275.3" stroke="#d0d0d0" stroke-width="1.1"/>
<line x1="1298.7" y1="93.4" x2="1249.7" y2="128.8" stroke="#d0d0d0" stroke-width="1.1"/>
<line x1="1298.7" y1="93.4" x2="1302.5" y2="135.5" stroke="#d0d0d0" stroke-width="1.1"/>
<line x1="1330.5" y1="39.4" x2="1268.5" y2="78.7" stroke="#d0d0d0" stroke-width="1.1"/>
<line x1="1330.5" y1="39.4" x2="1334.4" y2="86.4" stroke="#d0d0d0" stroke-width="1.1"/>
<path d="M198.0,328.0 L202.7,332.6 L200.5,332.6 L200.5,337.6 L195.5,337.6 L195.5,332.6 L193.3,332.6 Z" fill="none" stroke="#e08436" stroke-width="1.0" stroke-linejoin="miter"/>
<path d="M243.5,328.0 L248.2,332.6 L246.0,332.6 L246.0,337.6 L241.0,337.6 L241.0,332.6 L238.8,332.6 Z" fill="none" stroke="#e08436" stroke-width="1.0" stroke-linejoin="miter"/>
<path d="M400.4,319.7 L405.1,324.3 L402.9,324.3 L402.9,330.0 L397.9,330.0 L397.9,324.3 L395.7,324.3 Z" fill="none" stroke="#eadfd4" stroke-width="1.0" stroke-linejoin="miter"/>
<path d="M410.9,319.7 L415.6,324.3 L413.4,324.3 L413.4,330.0 L408.4,330.0 L408.4,324.3 L406.2,324.3 Z" fill="none" stroke="#eadfd4" stroke-width="1.0" stroke-linejoin="miter"/>
<path d="M1103.0,321.5 L1107.7,326.1 L1105.5,326.1 L1105.5,331.8 L1100.5,331.8 L1100.5,326.1 L1098.3,326.1 Z" fill="none" stroke="#e9a070" stroke-width="1.0" stroke-linejoin="miter"/>
<path d="M1103.0,321.2 L1107.7,325.8 L1105.5,325.8 L1105.5,326.2 L1100.5,326.2 L1100.5,325.8 L1098.3,325.8 Z" fill="none" stroke="#f0f0f0" stroke-width="1.0" stroke-linejoin="miter"/>
<text x="18" y="15.2" font-size="9" fill="#9c9c9c" textLength="39" lengthAdjust="spacingAndGlyphs">OILs,Daily</text>
<path d="M8.2,10.8 L13.8,10.8 L11,14.4 Z" fill="#e8e8e8"/>
<text x="14.3" y="37.2" font-size="12.8" fill="#f0f0f0" textLength="139.3" lengthAdjust="spacingAndGlyphs">0.01 lots = 63.8 € de marge</text>
<text x="797" y="22.1" font-size="11.7" fill="#dcdc00" textLength="94" lengthAdjust="spacingAndGlyphs">objectif du Triangle</text>
<text x="1214.2" y="35.7" font-size="11.7" fill="#6ed010" textLength="78.8" lengthAdjust="spacingAndGlyphs">ligne à rejoindre</text>
<text x="794.3" y="115.7" font-size="11.7" fill="#1fd0d0" textLength="29.3" lengthAdjust="spacingAndGlyphs">Shark</text>
<text x="1045.5" y="121.5" font-size="11.7" fill="#1fd0d0" textLength="88.5" lengthAdjust="spacingAndGlyphs">objectif2 5X4000€</text>
<text x="919" y="226.5" font-size="11.7" fill="#1fc6c6" textLength="101.5" lengthAdjust="spacingAndGlyphs">objectif1 de la shark</text>
<text x="133" y="434.0" font-size="12" fill="#dcdc00" textLength="39" lengthAdjust="spacingAndGlyphs">Triangle</text>
<text x="880.6" y="338.6" font-size="11.7" fill="#f0f0f0" textLength="59.8" lengthAdjust="spacingAndGlyphs">5X 0.22 lots</text>
<text x="863.4" y="362.1" font-size="11.7" fill="#f0f0f0" textLength="150.8" lengthAdjust="spacingAndGlyphs">Stop = 3X400€ + 300€ + 190€</text>
<text x="918.4" y="372.4" font-size="11.7" fill="#f0f0f0" textLength="47.9" lengthAdjust="spacingAndGlyphs">Ratio X10</text>
<text x="1033.8" y="341.7" font-size="11.7" fill="#22c4c4" textLength="26.8" lengthAdjust="spacingAndGlyphs">112%</text>
<text x="11" y="125.6" font-size="9.2" fill="#f0f0f0" textLength="50" lengthAdjust="spacingAndGlyphs" fill-opacity="0.62">#90757465 tp</text>
<text x="11" y="359.8" font-size="9.2" fill="#f0f0f0" textLength="48" lengthAdjust="spacingAndGlyphs" fill-opacity="0.62">#90757465 sl</text>
<text x="11" y="125.6" font-size="9.2" fill="#f0f0f0" textLength="50" lengthAdjust="spacingAndGlyphs" fill-opacity="0.62">#90757479 tp</text>
<text x="11" y="359.8" font-size="9.2" fill="#f0f0f0" textLength="48" lengthAdjust="spacingAndGlyphs" fill-opacity="0.62">#90757479 sl</text>
<text x="11" y="125.6" font-size="9.2" fill="#f0f0f0" textLength="50" lengthAdjust="spacingAndGlyphs" fill-opacity="0.62">#90757482 tp</text>
<text x="11" y="359.8" font-size="9.2" fill="#f0f0f0" textLength="48" lengthAdjust="spacingAndGlyphs" fill-opacity="0.62">#90757482 sl</text>
<text x="11" y="125.6" font-size="9.2" fill="#f0f0f0" textLength="50" lengthAdjust="spacingAndGlyphs" fill-opacity="0.62">#90833702 tp</text>
<text x="11" y="359.8" font-size="9.2" fill="#f0f0f0" textLength="48" lengthAdjust="spacingAndGlyphs" fill-opacity="0.62">#90833702 sl</text>
<text x="11" y="125.6" font-size="9.2" fill="#f0f0f0" textLength="50" lengthAdjust="spacingAndGlyphs" fill-opacity="0.62">#90840118 tp</text>
<text x="11" y="359.8" font-size="9.2" fill="#f0f0f0" textLength="48" lengthAdjust="spacingAndGlyphs" fill-opacity="0.62">#90840118 sl</text>
<text x="11" y="338.0" font-size="9.2" fill="#f0f0f0" textLength="76" lengthAdjust="spacingAndGlyphs" fill-opacity="0.7">#90757465 buy 0.22</text>
<text x="11" y="338.3" font-size="9.2" fill="#f0f0f0" textLength="76" lengthAdjust="spacingAndGlyphs" fill-opacity="0.7">#90757479 buy 0.22</text>
<text x="11" y="338.8" font-size="9.2" fill="#f0f0f0" textLength="76" lengthAdjust="spacingAndGlyphs" fill-opacity="0.7">#90757482 buy 0.22</text>
<text x="11" y="344.2" font-size="9.2" fill="#f0f0f0" textLength="76" lengthAdjust="spacingAndGlyphs" fill-opacity="0.9">#90833702 buy 0.22</text>
<text x="11" y="350.2" font-size="9.2" fill="#f0f0f0" textLength="76" lengthAdjust="spacingAndGlyphs" fill-opacity="0.9">#90840118 buy 0.22</text>
<rect x="732.5" y="6.9" width="26.3" height="10.5" fill="#333333" stroke="#ececec" stroke-width="1"/>
<line x1="759.3" y1="11.5" x2="768" y2="11.5" stroke="#f0f0f0" stroke-width="1.1"/>
<text x="745.65" y="15.7" font-size="9.8" fill="#f2f2f2" textLength="23.3" lengthAdjust="spacingAndGlyphs" text-anchor="middle">91.59</text>
<rect x="896.9" y="75.1" width="26.2" height="10.1" fill="#333333" stroke="#ececec" stroke-width="1"/>
<line x1="923.6" y1="80.3" x2="932" y2="80.3" stroke="#f0f0f0" stroke-width="1.1"/>
<text x="910.0" y="83.5" font-size="9.8" fill="#f2f2f2" textLength="23.2" lengthAdjust="spacingAndGlyphs" text-anchor="middle">84.90</text>
<rect x="896.9" y="122.5" width="26.2" height="10.0" fill="#333333" stroke="#ececec" stroke-width="1"/>
<line x1="923.6" y1="127.3" x2="932.5" y2="127.3" stroke="#f0f0f0" stroke-width="1.1"/>
<text x="910.0" y="130.8" font-size="9.8" fill="#f2f2f2" textLength="23.2" lengthAdjust="spacingAndGlyphs" text-anchor="middle">80.27</text>
<rect x="1033.5" y="244.0" width="25.8" height="10.5" fill="#333333" stroke="#ececec" stroke-width="1"/>
<line x1="1059.8" y1="249" x2="1069" y2="249" stroke="#b8b8b8" stroke-width="1.1"/>
<text x="1046.4" y="252.8" font-size="9.8" fill="#f2f2f2" textLength="22.8" lengthAdjust="spacingAndGlyphs" text-anchor="middle">68.48</text>
<polyline fill="none" stroke="#16d4d4" stroke-width="0.95" stroke-linejoin="round" points="408,317.5 649.5,125.5 862,230.5 984.3,61.5 1071.3,340"/>
</g>
<rect x="0" y="0" width="1400" height="1.9" fill="#f4f4f4"/>
<rect x="0" y="1.9" width="1400" height="1.0" fill="#858585"/>
<rect x="0" y="2.9" width="1400" height="2.1" fill="#2a2a2a"/>
<rect x="0" y="0" width="1.2" height="484" fill="#eeeef6"/>
<rect x="1.2" y="1.6" width="1.2" height="482.4" fill="#8a8a8a"/>
<rect x="2.4" y="2.8" width="1.8" height="481.2" fill="#2c2c2c"/>
<rect x="4.2" y="5" width="1.5" height="461" fill="#a0a0a0"/>
<rect x="4.2" y="5" width="1358.8" height="1.1" fill="#c0c0c0"/>
<rect x="1397.2" y="0" width="2.8" height="484" fill="#f2f2f2"/>
<path d="M1140.3,5.6 L1148.3,5.6 L1144.3,9.8 Z" fill="#909090"/>
<rect x="1221" y="0" width="1" height="1.6" fill="#707070"/>
<rect x="1362.0" y="5" width="1.0" height="461.0" fill="#d4d4d4"/>
<rect x="4.2" y="464.9" width="1358.8" height="1.1" fill="#c4c4c4"/>
<rect x="1363.0" y="30.3" width="2.4" height="1" fill="#c8c8c8"/>
<text x="1367.5" y="34.1" font-size="9" fill="#d8d8d8" textLength="20.4" lengthAdjust="spacingAndGlyphs">89.75</text>
<rect x="1363.0" y="59.0" width="2.4" height="1" fill="#c8c8c8"/>
<text x="1367.5" y="62.8" font-size="9" fill="#d8d8d8" textLength="20.4" lengthAdjust="spacingAndGlyphs">86.95</text>
<rect x="1363.0" y="88.2" width="2.4" height="1" fill="#c8c8c8"/>
<text x="1367.5" y="92.0" font-size="9" fill="#d8d8d8" textLength="20.4" lengthAdjust="spacingAndGlyphs">84.10</text>
<rect x="1363.0" y="116.9" width="2.4" height="1" fill="#c8c8c8"/>
<text x="1367.5" y="120.7" font-size="9" fill="#d8d8d8" textLength="20.4" lengthAdjust="spacingAndGlyphs">81.30</text>
<rect x="1363.0" y="145.6" width="2.4" height="1" fill="#c8c8c8"/>
<text x="1367.5" y="149.4" font-size="9" fill="#d8d8d8" textLength="20.4" lengthAdjust="spacingAndGlyphs">78.50</text>
<rect x="1363.0" y="174.3" width="2.4" height="1" fill="#c8c8c8"/>
<text x="1367.5" y="178.1" font-size="9" fill="#d8d8d8" textLength="20.4" lengthAdjust="spacingAndGlyphs">75.70</text>
<rect x="1363.0" y="203.0" width="2.4" height="1" fill="#c8c8c8"/>
<text x="1367.5" y="206.8" font-size="9" fill="#d8d8d8" textLength="20.4" lengthAdjust="spacingAndGlyphs">72.90</text>
<rect x="1363.0" y="232.2" width="2.4" height="1" fill="#c8c8c8"/>
<text x="1367.5" y="236.0" font-size="9" fill="#d8d8d8" textLength="20.4" lengthAdjust="spacingAndGlyphs">70.05</text>
<rect x="1363.0" y="260.9" width="2.4" height="1" fill="#c8c8c8"/>
<text x="1367.5" y="264.7" font-size="9" fill="#d8d8d8" textLength="20.4" lengthAdjust="spacingAndGlyphs">67.25</text>
<rect x="1363.0" y="289.6" width="2.4" height="1" fill="#c8c8c8"/>
<text x="1367.5" y="293.4" font-size="9" fill="#d8d8d8" textLength="20.4" lengthAdjust="spacingAndGlyphs">64.45</text>
<rect x="1363.0" y="318.3" width="2.4" height="1" fill="#c8c8c8"/>
<text x="1367.5" y="322.1" font-size="9" fill="#d8d8d8" textLength="20.4" lengthAdjust="spacingAndGlyphs">61.65</text>
<rect x="1363.0" y="347.0" width="2.4" height="1" fill="#c8c8c8"/>
<text x="1367.5" y="350.8" font-size="9" fill="#d8d8d8" textLength="20.4" lengthAdjust="spacingAndGlyphs">58.85</text>
<rect x="1363.0" y="376.2" width="2.4" height="1" fill="#c8c8c8"/>
<text x="1367.5" y="380.0" font-size="9" fill="#d8d8d8" textLength="20.4" lengthAdjust="spacingAndGlyphs">56.00</text>
<rect x="1363.0" y="404.9" width="2.4" height="1" fill="#c8c8c8"/>
<text x="1367.5" y="408.7" font-size="9" fill="#d8d8d8" textLength="20.4" lengthAdjust="spacingAndGlyphs">53.20</text>
<rect x="1363.0" y="433.6" width="2.4" height="1" fill="#c8c8c8"/>
<text x="1367.5" y="437.4" font-size="9" fill="#d8d8d8" textLength="20.4" lengthAdjust="spacingAndGlyphs">50.40</text>
<rect x="1363.0" y="462.3" width="2.4" height="1" fill="#c8c8c8"/>
<text x="1367.5" y="466.1" font-size="9" fill="#d8d8d8" textLength="20.4" lengthAdjust="spacingAndGlyphs">47.60</text>
<rect x="1364.6" y="298.5" width="25.7" height="9.2" fill="#dadada"/>
<text x="1367.5" y="306.6" font-size="9" fill="#202020" textLength="20.4" lengthAdjust="spacingAndGlyphs">63.16</text>
<rect x="5.0" y="465.4" width="1" height="2.8" fill="#c8c8c8"/>
<text transform="translate(4.9,477) scale(0.878,1)" font-size="9" fill="#d8d8d8">1 Sep 2017</text>
<rect x="61.0" y="465.4" width="1" height="2.8" fill="#c8c8c8"/>
<text transform="translate(60.9,477) scale(0.878,1)" font-size="9" fill="#d8d8d8">25 Sep 2017</text>
<rect x="117.0" y="465.4" width="1" height="2.8" fill="#c8c8c8"/>
<text transform="translate(116.9,477) scale(0.878,1)" font-size="9" fill="#d8d8d8">17 Oct 2017</text>
<rect x="173.0" y="465.4" width="1" height="2.8" fill="#c8c8c8"/>
<text transform="translate(172.9,477) scale(0.878,1)" font-size="9" fill="#d8d8d8">8 Nov 2017</text>
<rect x="228.5" y="465.4" width="1" height="2.8" fill="#c8c8c8"/>
<text transform="translate(228.4,477) scale(0.878,1)" font-size="9" fill="#d8d8d8">30 Nov 2017</text>
<rect x="284.5" y="465.4" width="1" height="2.8" fill="#c8c8c8"/>
<text transform="translate(284.4,477) scale(0.878,1)" font-size="9" fill="#d8d8d8">22 Dec 2017</text>
<rect x="340.5" y="465.4" width="1" height="2.8" fill="#c8c8c8"/>
<text transform="translate(340.4,477) scale(0.878,1)" font-size="9" fill="#d8d8d8">17 Jan 2018</text>
<rect x="396.5" y="465.4" width="1" height="2.8" fill="#c8c8c8"/>
<text transform="translate(396.4,477) scale(0.878,1)" font-size="9" fill="#d8d8d8">8 Feb 2018</text>
<rect x="452.5" y="465.4" width="1" height="2.8" fill="#c8c8c8"/>
<text transform="translate(452.4,477) scale(0.92,1)" font-size="9" fill="#d8d8d8">2 Mar 2018</text>
<rect x="508.5" y="465.4" width="1" height="2.8" fill="#c8c8c8"/>
<text transform="translate(508.4,477) scale(0.92,1)" font-size="9" fill="#d8d8d8">26 Mar 2018</text>
<rect x="564.5" y="465.4" width="1" height="2.8" fill="#c8c8c8"/>
<text transform="translate(564.4,477) scale(0.878,1)" font-size="9" fill="#d8d8d8">18 Apr 2018</text>
<rect x="620.5" y="465.4" width="1" height="2.8" fill="#c8c8c8"/>
<text transform="translate(620.4,477) scale(0.92,1)" font-size="9" fill="#d8d8d8">10 May 2018</text>
<rect x="676.0" y="465.4" width="1" height="2.8" fill="#c8c8c8"/>
<text transform="translate(675.9,477) scale(0.878,1)" font-size="9" fill="#d8d8d8">1 Jun 2018</text>
<rect x="732.0" y="465.4" width="1" height="2.8" fill="#c8c8c8"/>
<text transform="translate(731.9,477) scale(0.878,1)" font-size="9" fill="#d8d8d8">25 Jun 2018</text>
<rect x="788.0" y="465.4" width="1" height="2.8" fill="#c8c8c8"/>
<text transform="translate(787.9,477) scale(0.878,1)" font-size="9" fill="#d8d8d8">17 Jul 2018</text>
<rect x="844.0" y="465.4" width="1" height="2.8" fill="#c8c8c8"/>
<text transform="translate(843.9,477) scale(0.878,1)" font-size="9" fill="#d8d8d8">8 Aug 2018</text>
<rect x="900.0" y="465.4" width="1" height="2.8" fill="#c8c8c8"/>
<text transform="translate(899.9,477) scale(0.878,1)" font-size="9" fill="#d8d8d8">30 Aug 2018</text>
<rect x="956.0" y="465.4" width="1" height="2.8" fill="#c8c8c8"/>
<text transform="translate(955.9,477) scale(0.878,1)" font-size="9" fill="#d8d8d8">21 Sep 2018</text>
<rect x="1012.0" y="465.4" width="1" height="2.8" fill="#c8c8c8"/>
<text transform="translate(1011.9,477) scale(0.878,1)" font-size="9" fill="#d8d8d8">15 Oct 2018</text>
<rect x="1068.0" y="465.4" width="1" height="2.8" fill="#c8c8c8"/>
<text transform="translate(1067.9,477) scale(0.878,1)" font-size="9" fill="#d8d8d8">6 Nov 2018</text>
<rect x="1123.5" y="465.4" width="1" height="2.8" fill="#c8c8c8"/>
<text transform="translate(1123.4,477) scale(0.878,1)" font-size="9" fill="#d8d8d8">28 Nov 2018</text>
</svg>
<div class="tabs">
<span class="tab" style="left:16px">AUDCAD,Weekly</span>
<span class="tab" style="left:115px">AUDCHF,Daily</span>
<span class="tab" style="left:200px">AUDJPY,Weekly</span>
<span class="tab" style="left:292px">AUDNZD,Weekly</span>
<span class="tab" style="left:389px">AUDUSD,Daily</span>
<span class="tab" style="left:474px">CADCHF,Weekly</span>
<span class="tab" style="left:571px">CADJPY,Weekly</span>
<span class="tab" style="left:661px">CHFHUF,Weekly</span>
<span class="tab" style="left:757px">CHFJPY,Daily</span>
<span class="tab" style="left:837px">CHFPLN,Weekly</span>
<span class="tab" style="left:931px">EURAUD,Daily</span>
<span class="tab" style="left:1015px">EURCAD,Daily</span>
<span class="tab" style="left:1099px">EURCHF,Daily</span>
<span class="tab" style="left:1184px">EURGBP,Daily</span>
<span class="tab" style="left:1267px">EURHUF,Weekly</span>
<i class="sep" style="left:103.5px"></i>
<i class="sep" style="left:191.0px"></i>
<i class="sep" style="left:282.0px"></i>
<i class="sep" style="left:379.9px"></i>
<i class="sep" style="left:463.0px"></i>
<i class="sep" style="left:561.0px"></i>
<i class="sep" style="left:652.0px"></i>
<i class="sep" style="left:747.0px"></i>
<i class="sep" style="left:827.0px"></i>
<i class="sep" style="left:919.5px"></i>
<i class="sep" style="left:1005.5px"></i>
<i class="sep" style="left:1088.5px"></i>
<i class="sep" style="left:1171.0px"></i>
<i class="sep" style="left:1255.5px"></i>
<i class="sep" style="left:1351.8px"></i>
<span class="tab" style="left:1362.6px;width:3.6px;overflow:hidden">E</span>
<i class="arl"></i><i class="arr"></i>
</div>
<div class="term">
<div class="side"></div><div class="sidetxt">Terminal</div>
<div class="xbtn">×</div>
<div class="tbl">
<div class="hdr">
<div class="hc l" style="left:0px;width:134.5px"><span>Ordre</span></div>
<div class="hc r" style="left:134.5px;width:187.5px"><span>Heure</span></div>
<div class="hc r" style="left:322px;width:93px"><span>Transaction</span></div>
<div class="hc r" style="left:415px;width:72.39999999999998px"><span>Volume</span></div>
<div class="hc r" style="left:487.4px;width:93.60000000000002px"><span>Symbole<svg class="srt" width="8" height="7" viewBox="0 0 8 7"><path d="M0.6,0.8 H7.2 L3.9,6 Z" fill="#fff" stroke="#8a8a8a" stroke-width="0.9"/></svg></span></div>
<div class="hc r" style="left:581px;width:104px"><span>Prix</span></div>
<div class="hc r" style="left:685px;width:103.5px"><span>S/L (Stop/Perte)</span></div>
<div class="hc r" style="left:788.5px;width:104.0px"><span>T/P (Prendre/profit)</span></div>
<div class="hc r" style="left:892.5px;width:103.5px"><span>Prix</span></div>
<div class="hc r" style="left:996px;width:104.59999999999991px"><span>Commission</span></div>
<div class="hc r" style="left:1100.6px;width:103.90000000000009px"><span>Echange</span></div>
<div class="hc r" style="left:1204.5px;width:160.9000000000001px"><span>&amp;Profit</span></div>
</div>
<div class="row g" style="top:21.8px">
<div class="c l" style="left:0px;width:134.5px"><svg class="ico" width="13" height="13" viewBox="0 0 13 13"><path d="M1.5,0.8 H7.2 L10,3.6 V11.6 H1.5 Z" fill="#fff" stroke="#555" stroke-width="1"/><path d="M7,0.8 V3.8 H10" fill="none" stroke="#555" stroke-width="0.9"/><circle cx="9.2" cy="9.8" r="2.9" fill="#2b8de0" stroke="#1565b0" stroke-width="0.6"/></svg><span class="ord">90840118</span></div>
<div class="c r" style="left:134.5px;width:187.5px"><span class="v n">2018.11.29 09:59:21</span></div>
<div class="c r" style="left:322px;width:93px"><span class="v">buy</span></div>
<div class="c r" style="left:415px;width:72.39999999999998px"><span class="v n">0.22</span></div>
<div class="c r" style="left:487.4px;width:93.60000000000002px"><span class="v">oils</span></div>
<div class="c r" style="left:581px;width:104px"><span class="v n">58.39</span></div>
<div class="c r" style="left:685px;width:103.5px"><span class="v n">57.49</span></div>
<div class="c r" style="left:788.5px;width:104.0px"><span class="v n">80.27</span></div>
<div class="c r" style="left:892.5px;width:103.5px"><span class="v n">63.16</span></div>
<div class="c r" style="left:996px;width:104.59999999999991px"><span class="v n">0.00</span></div>
<div class="c r" style="left:1100.6px;width:103.90000000000009px"><span class="v n">0.00</span></div>
<div class="c r" style="left:1204.5px;width:160.9000000000001px"><span class="pv">919.67</span><span class="cx">×</span></div>
</div>
<div class="row" style="top:39.3px">
<div class="c l" style="left:0px;width:134.5px"><svg class="ico" width="13" height="13" viewBox="0 0 13 13"><path d="M1.5,0.8 H7.2 L10,3.6 V11.6 H1.5 Z" fill="#fff" stroke="#555" stroke-width="1"/><path d="M7,0.8 V3.8 H10" fill="none" stroke="#555" stroke-width="0.9"/><circle cx="9.2" cy="9.8" r="2.9" fill="#2b8de0" stroke="#1565b0" stroke-width="0.6"/></svg><span class="ord">90833702</span></div>
<div class="c r" style="left:134.5px;width:187.5px"><span class="v n">2018.11.28 22:23:40</span></div>
<div class="c r" style="left:322px;width:93px"><span class="v">buy</span></div>
<div class="c r" style="left:415px;width:72.39999999999998px"><span class="v n">0.22</span></div>
<div class="c r" style="left:487.4px;width:93.60000000000002px"><span class="v">oils</span></div>
<div class="c r" style="left:581px;width:104px"><span class="v n">59.00</span></div>
<div class="c r" style="left:685px;width:103.5px"><span class="v n">57.49</span></div>
<div class="c r" style="left:788.5px;width:104.0px"><span class="v n">80.27</span></div>
<div class="c r" style="left:892.5px;width:103.5px"><span class="v n">63.16</span></div>
<div class="c r" style="left:996px;width:104.59999999999991px"><span class="v n">0.00</span></div>
<div class="c r" style="left:1100.6px;width:103.90000000000009px"><span class="v n">0.00</span></div>
<div class="c r" style="left:1204.5px;width:160.9000000000001px"><span class="pv">802.06</span><span class="cx">×</span></div>
</div>
<div class="row g" style="top:56.8px">
<div class="c l" style="left:0px;width:134.5px"><svg class="ico" width="13" height="13" viewBox="0 0 13 13"><path d="M1.5,0.8 H7.2 L10,3.6 V11.6 H1.5 Z" fill="#fff" stroke="#555" stroke-width="1"/><path d="M7,0.8 V3.8 H10" fill="none" stroke="#555" stroke-width="0.9"/><circle cx="9.2" cy="9.8" r="2.9" fill="#2b8de0" stroke="#1565b0" stroke-width="0.6"/></svg><span class="ord">90757482</span></div>
<div class="c r" style="left:134.5px;width:187.5px"><span class="v n">2018.11.23 16:09:47</span></div>
<div class="c r" style="left:322px;width:93px"><span class="v">buy</span></div>
<div class="c r" style="left:415px;width:72.39999999999998px"><span class="v n">0.22</span></div>
<div class="c r" style="left:487.4px;width:93.60000000000002px"><span class="v">oils</span></div>
<div class="c r" style="left:581px;width:104px"><span class="v n">59.56</span></div>
<div class="c r" style="left:685px;width:103.5px"><span class="v n">57.49</span></div>
<div class="c r" style="left:788.5px;width:104.0px"><span class="v n">80.27</span></div>
<div class="c r" style="left:892.5px;width:103.5px"><span class="v n">63.16</span></div>
<div class="c r" style="left:996px;width:104.59999999999991px"><span class="v n">0.00</span></div>
<div class="c r" style="left:1100.6px;width:103.90000000000009px"><span class="v n">0.00</span></div>
<div class="c r" style="left:1204.5px;width:160.9000000000001px"><span class="pv">694.09</span><span class="cx">×</span></div>
</div>
<div class="row" style="top:74.3px">
<div class="c l" style="left:0px;width:134.5px"><svg class="ico" width="13" height="13" viewBox="0 0 13 13"><path d="M1.5,0.8 H7.2 L10,3.6 V11.6 H1.5 Z" fill="#fff" stroke="#555" stroke-width="1"/><path d="M7,0.8 V3.8 H10" fill="none" stroke="#555" stroke-width="0.9"/><circle cx="9.2" cy="9.8" r="2.9" fill="#2b8de0" stroke="#1565b0" stroke-width="0.6"/></svg><span class="ord">90757479</span></div>
<div class="c r" style="left:134.5px;width:187.5px"><span class="v n">2018.11.23 16:09:31</span></div>
<div class="c r" style="left:322px;width:93px"><span class="v">buy</span></div>
<div class="c r" style="left:415px;width:72.39999999999998px"><span class="v n">0.22</span></div>
<div class="c r" style="left:487.4px;width:93.60000000000002px"><span class="v">oils</span></div>
<div class="c r" style="left:581px;width:104px"><span class="v n">59.50</span></div>
<div class="c r" style="left:685px;width:103.5px"><span class="v n">57.49</span></div>
<div class="c r" style="left:788.5px;width:104.0px"><span class="v n">80.27</span></div>
<div class="c r" style="left:892.5px;width:103.5px"><span class="v n">63.16</span></div>
<div class="c r" style="left:996px;width:104.59999999999991px"><span class="v n">0.00</span></div>
<div class="c r" style="left:1100.6px;width:103.90000000000009px"><span class="v n">0.00</span></div>
<div class="c r" style="left:1204.5px;width:160.9000000000001px"><span class="pv">705.66</span><span class="cx">×</span></div>
</div>
<div class="row g" style="top:91.8px">
<div class="c l" style="left:0px;width:134.5px"><svg class="ico" width="13" height="13" viewBox="0 0 13 13"><path d="M1.5,0.8 H7.2 L10,3.6 V11.6 H1.5 Z" fill="#fff" stroke="#555" stroke-width="1"/><path d="M7,0.8 V3.8 H10" fill="none" stroke="#555" stroke-width="0.9"/><circle cx="9.2" cy="9.8" r="2.9" fill="#2b8de0" stroke="#1565b0" stroke-width="0.6"/></svg><span class="ord">90757465</span></div>
<div class="c r" style="left:134.5px;width:187.5px"><span class="v n">2018.11.23 16:08:32</span></div>
<div class="c r" style="left:322px;width:93px"><span class="v">buy</span></div>
<div class="c r" style="left:415px;width:72.39999999999998px"><span class="v n">0.22</span></div>
<div class="c r" style="left:487.4px;width:93.60000000000002px"><span class="v">oils</span></div>
<div class="c r" style="left:581px;width:104px"><span class="v n">59.58</span></div>
<div class="c r" style="left:685px;width:103.5px"><span class="v n">57.49</span></div>
<div class="c r" style="left:788.5px;width:104.0px"><span class="v n">80.27</span></div>
<div class="c r" style="left:892.5px;width:103.5px"><span class="v n">63.16</span></div>
<div class="c r" style="left:996px;width:104.59999999999991px"><span class="v n">0.00</span></div>
<div class="c r" style="left:1100.6px;width:103.90000000000009px"><span class="v n">0.00</span></div>
<div class="c r" style="left:1204.5px;width:160.9000000000001px"><span class="pv">690.24</span><span class="cx">×</span></div>
</div>
<div class="row" style="top:109.3px">
<div class="c l" style="left:0px;width:134.5px"><svg class="ico" width="13" height="13" viewBox="0 0 13 13"><path d="M1.5,0.8 H7.2 L10,3.6 V11.6 H1.5 Z" fill="#fff" stroke="#555" stroke-width="1"/><path d="M7,0.8 V3.8 H10" fill="none" stroke="#555" stroke-width="0.9"/><circle cx="9.2" cy="9.8" r="2.9" fill="#2b8de0" stroke="#1565b0" stroke-width="0.6"/></svg><span class="ord">90794296</span></div>
<div class="c r" style="left:134.5px;width:187.5px"><span class="v n">2018.12.03 12:02:15</span></div>
<div class="c r" style="left:322px;width:93px"><span class="v">buy</span></div>
<div class="c r" style="left:415px;width:72.39999999999998px"><span class="v n">0.42</span></div>
<div class="c r" style="left:487.4px;width:93.60000000000002px"><span class="v">gbpusd</span></div>
<div class="c r" style="left:581px;width:104px"><span class="v n">1.27125</span></div>
<div class="c r" style="left:685px;width:103.5px"><span class="v n">1.26600</span></div>
<div class="c r" style="left:788.5px;width:104.0px"><span class="v n">1.30291</span></div>
<div class="c r" style="left:892.5px;width:103.5px"><span class="v n">1.28083</span></div>
<div class="c r" style="left:996px;width:104.59999999999991px"><span class="v n">0.00</span></div>
<div class="c r" style="left:1100.6px;width:103.90000000000009px"><span class="v n">-3.04</span></div>
<div class="c r" style="left:1204.5px;width:160.9000000000001px"><span class="pv">352.62</span><span class="cx">×</span></div>
</div>
<div class="row g" style="top:126.8px">
<div class="c l" style="left:0px;width:134.5px"><svg class="ico" width="13" height="13" viewBox="0 0 13 13"><path d="M1.5,0.8 H7.2 L10,3.6 V11.6 H1.5 Z" fill="#fff" stroke="#555" stroke-width="1"/><path d="M7,0.8 V3.8 H10" fill="none" stroke="#555" stroke-width="0.9"/><circle cx="9.2" cy="9.8" r="2.9" fill="#2b8de0" stroke="#1565b0" stroke-width="0.6"/></svg><span class="ord">90794272</span></div>
<div class="c r" style="left:134.5px;width:187.5px"><span class="v n">2018.12.03 12:02:15</span></div>
<div class="c r" style="left:322px;width:93px"><span class="v">buy</span></div>
<div class="c r" style="left:415px;width:72.39999999999998px"><span class="v n">0.42</span></div>
<div class="c r" style="left:487.4px;width:93.60000000000002px"><span class="v">gbpusd</span></div>
<div class="c r" style="left:581px;width:104px"><span class="v n">1.27125</span></div>
<div class="c r" style="left:685px;width:103.5px"><span class="v n">1.26600</span></div>
<div class="c r" style="left:788.5px;width:104.0px"><span class="v n">1.30291</span></div>
<div class="c r" style="left:892.5px;width:103.5px"><span class="v n">1.28083</span></div>
<div class="c r" style="left:996px;width:104.59999999999991px"><span class="v n">0.00</span></div>
<div class="c r" style="left:1100.6px;width:103.90000000000009px"><span class="v n">-3.04</span></div>
<div class="c r" style="left:1204.5px;width:160.9000000000001px"><span class="pv">352.62</span><span class="cx">×</span></div>
</div>
</div>
<div class="sb"><i class="up"></i><div class="thumb"><i></i><i></i><i></i></div><i class="dn"></i></div>
<div class="botline"></div>
</div>
</body></html>
